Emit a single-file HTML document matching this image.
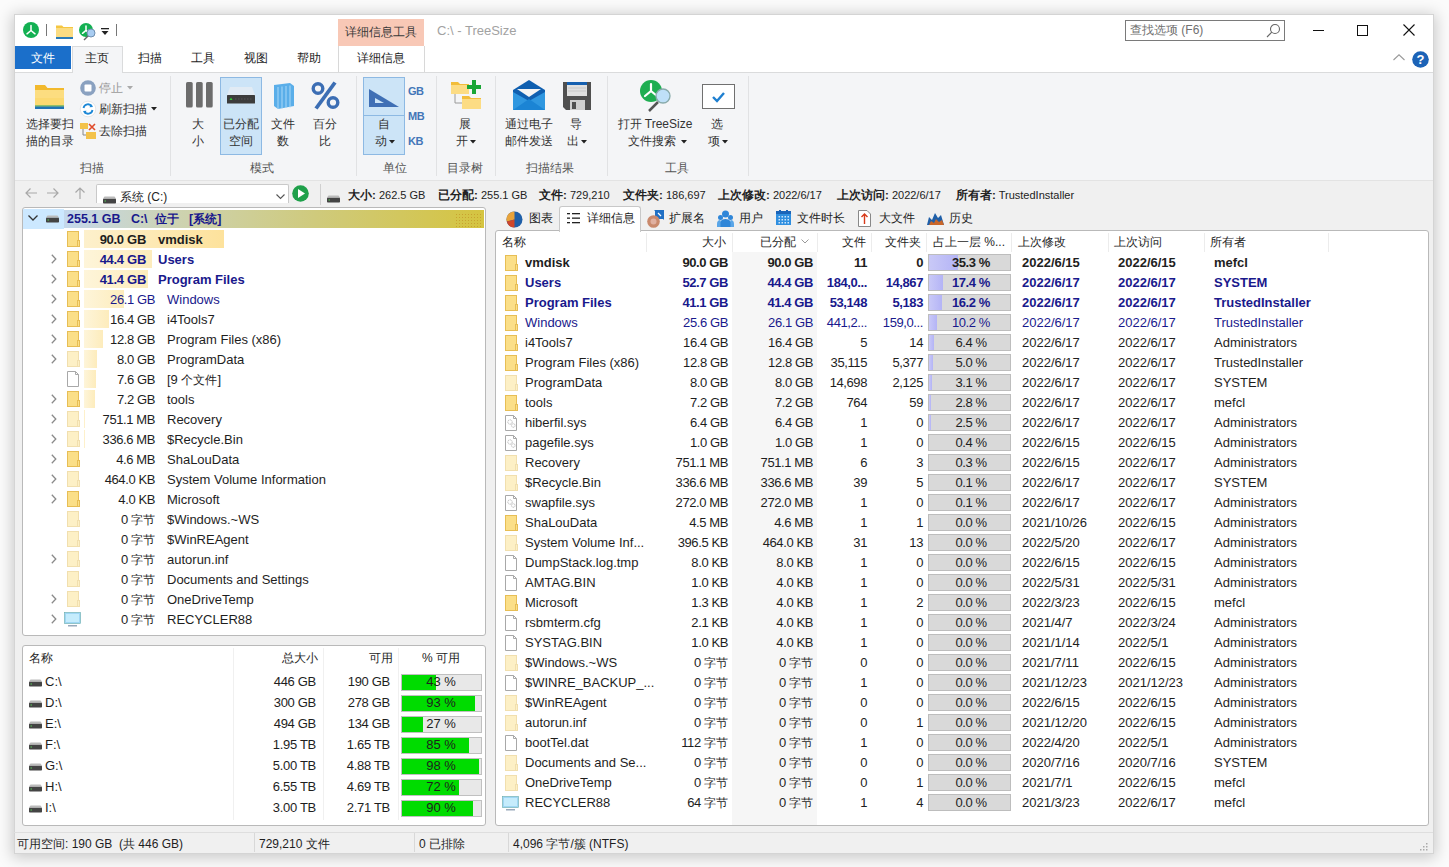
<!DOCTYPE html><html><head><meta charset="utf-8"><style>
*{margin:0;padding:0;box-sizing:border-box}
html,body{width:1449px;height:867px;overflow:hidden;background:#fbfbfb;font-family:"Liberation Sans",sans-serif;font-size:13px;color:#1e1e1e}
.t{position:absolute;white-space:nowrap;line-height:20px;height:20px}
.r{position:absolute}
.b{font-weight:bold}
.bl{color:#19198c}
.svg{position:absolute;overflow:visible}
.c{display:inline-block;width:12px;text-align:center;font-style:normal;font-size:12px}
html.nocjk .c{-webkit-text-fill-color:transparent;opacity:.85;background-repeat:no-repeat;
background-image:linear-gradient(currentColor,currentColor),linear-gradient(currentColor,currentColor),linear-gradient(currentColor,currentColor),linear-gradient(currentColor,currentColor),linear-gradient(currentColor,currentColor);
background-size:10px 1px,10px 1px,10px 1px,1px 11px,1px 11px;
background-position:1px 5px,1px 9px,1px 14px,3px 4px,8px 4px}
html.nocjk .c:nth-child(3n+2){background-size:10px 1px,7px 1px,10px 1px,1px 11px,1px 9px;background-position:1px 5px,4px 10px,1px 14px,2px 4px,7px 6px}
html.nocjk .c:nth-child(3n){background-size:10px 1px,10px 1px,6px 1px,1px 11px,1px 11px;background-position:1px 4px,1px 10px,5px 14px,5px 4px,9px 4px}
</style></head><body>
<div class="r" style="left:14px;top:14px;width:1420px;height:840px;background:#f0f0f0;border:1px solid #d4d4d4;box-shadow:0 2px 14px 2px rgba(0,0,0,0.20)"></div>
<div class="r" style="left:15px;top:15px;width:1418px;height:57px;background:#fff"></div>
<div class="r" style="left:15px;top:72px;width:1418px;height:109px;background:#f4f5f7;border-top:1px solid #dadbdc;border-bottom:1px solid #e3e3e3"></div>
<svg class="svg" style="left:0px;top:0px" width="1" height="1" viewBox="0 0 1 1"><circle cx="31" cy="30" r="8" fill="#13b052"/><path d="M31 25.5 V30.5 L27.0 33.8 M31 30.5 L35.0 33.8" stroke="#fff" stroke-width="1.5" fill="none" stroke-linecap="round"/></svg>
<div class="r" style="left:46px;top:24px;width:1px;height:12px;background:#777"></div>
<svg class="svg" style="left:56px;top:24px" width="17" height="15" viewBox="0 0 17 15"><path d="M0 1.5 h6 l1.5 1.5 h9.5 v10.5 h-17z" fill="#f5c640"/><rect x="0" y="4" width="17" height="9.5" fill="#fbdc82"/><rect x="0" y="13" width="17" height="2" fill="#2a7bb8"/></svg>
<svg class="svg" style="left:0px;top:0px" width="1" height="1" viewBox="0 0 1 1"><circle cx="86" cy="30" r="7" fill="#13b052"/><path d="M86 26.0625 V30.4375 L82.5 33.325 M86 30.4375 L89.5 33.325" stroke="#fff" stroke-width="1.5" fill="none" stroke-linecap="round"/><circle cx="91" cy="33" r="4" fill="#a9cdf2" stroke="#6f8fb0" stroke-width="1"/><path d="M88 36 L84 40" stroke="#666" stroke-width="1.5"/></svg>
<svg class="svg" style="left:101px;top:28px" width="8" height="8" viewBox="0 0 8 8"><rect x="0" y="0" width="8" height="1.3" fill="#222"/><path d="M0.5 3 h7 l-3.5 4z" fill="#222"/></svg>
<div class="r" style="left:116px;top:24px;width:1px;height:12px;background:#777"></div>
<div class="r" style="left:338px;top:19px;width:86px;height:27px;background:#f8c8b6"></div>
<div class="t " style="left:231px;top:22px;width:300px;text-align:center;color:#3a3a3a;font-size:12px"><i class="c">详</i><i class="c">细</i><i class="c">信</i><i class="c">息</i><i class="c">工</i><i class="c">具</i></div>
<div class="t " style="left:437px;top:21px;color:#a2a2a2">C:\ - TreeSize</div>
<div class="r" style="left:1125px;top:20px;width:160px;height:21px;background:#fff;border:1px solid #7a7a7a"></div>
<div class="t " style="left:1130px;top:20px;color:#707070;font-size:12px"><i class="c">查</i><i class="c">找</i><i class="c">选</i><i class="c">项</i> (F6)</div>
<svg class="svg" style="left:1266px;top:23px" width="15" height="15" viewBox="0 0 15 15"><circle cx="9" cy="6" r="4.5" fill="none" stroke="#666" stroke-width="1.1"/><path d="M5.8 9.2 L1 14" stroke="#666" stroke-width="1.1"/></svg>
<div class="r" style="left:1313px;top:30px;width:11px;height:1px;background:#111"></div>
<div class="r" style="left:1357px;top:25px;width:11px;height:11px;border:1px solid #111"></div>
<svg class="svg" style="left:1403px;top:24px" width="12" height="12" viewBox="0 0 12 12"><path d="M0.5 0.5 L11.5 11.5 M11.5 0.5 L0.5 11.5" stroke="#111" stroke-width="1.1"/></svg>
<div class="r" style="left:15px;top:46px;width:56px;height:23px;background:#1b6fca"></div>
<div class="t " style="left:-107px;top:48px;width:300px;text-align:center;color:#fff;font-size:12px"><i class="c">文</i><i class="c">件</i></div>
<div class="r" style="left:72px;top:46px;width:51px;height:27px;background:#f4f5f7;border:1px solid #dadbdc;border-bottom:none"></div>
<div class="t " style="left:-53px;top:48px;width:300px;text-align:center;font-size:12px"><i class="c">主</i><i class="c">页</i></div>
<div class="t " style="left:0px;top:48px;width:300px;text-align:center;font-size:12px"><i class="c">扫</i><i class="c">描</i></div>
<div class="t " style="left:53px;top:48px;width:300px;text-align:center;font-size:12px"><i class="c">工</i><i class="c">具</i></div>
<div class="t " style="left:106px;top:48px;width:300px;text-align:center;font-size:12px"><i class="c">视</i><i class="c">图</i></div>
<div class="t " style="left:159px;top:48px;width:300px;text-align:center;font-size:12px"><i class="c">帮</i><i class="c">助</i></div>
<div class="r" style="left:338px;top:46px;width:1px;height:26px;background:#d8d8d8"></div>
<div class="r" style="left:424px;top:46px;width:1px;height:26px;background:#d8d8d8"></div>
<div class="t " style="left:231px;top:48px;width:300px;text-align:center;font-size:12px"><i class="c">详</i><i class="c">细</i><i class="c">信</i><i class="c">息</i></div>
<svg class="svg" style="left:1393px;top:54px" width="12" height="7" viewBox="0 0 12 7"><path d="M0.5 6 L6 0.8 L11.5 6" stroke="#9a9a9a" stroke-width="1.1" fill="none"/></svg>
<svg class="svg" style="left:1412px;top:51px" width="17" height="17" viewBox="0 0 17 17"><circle cx="8.5" cy="8.5" r="8.3" fill="#1c63b7"/><text x="8.5" y="13.2" font-size="13" font-weight="bold" text-anchor="middle" fill="#fff" font-family="Liberation Sans">?</text></svg>
<div class="r" style="left:170px;top:76px;width:1px;height:100px;background:#e1e2e4"></div>
<div class="r" style="left:356px;top:76px;width:1px;height:100px;background:#e1e2e4"></div>
<div class="r" style="left:436px;top:76px;width:1px;height:100px;background:#e1e2e4"></div>
<div class="r" style="left:495px;top:76px;width:1px;height:100px;background:#e1e2e4"></div>
<div class="r" style="left:607px;top:76px;width:1px;height:100px;background:#e1e2e4"></div>
<div class="r" style="left:748px;top:76px;width:1px;height:100px;background:#e1e2e4"></div>
<div class="t " style="left:-58px;top:158px;width:300px;text-align:center;color:#555;font-size:12px"><i class="c">扫</i><i class="c">描</i></div>
<div class="t " style="left:112px;top:158px;width:300px;text-align:center;color:#555;font-size:12px"><i class="c">模</i><i class="c">式</i></div>
<div class="t " style="left:245px;top:158px;width:300px;text-align:center;color:#555;font-size:12px"><i class="c">单</i><i class="c">位</i></div>
<div class="t " style="left:315px;top:158px;width:300px;text-align:center;color:#555;font-size:12px"><i class="c">目</i><i class="c">录</i><i class="c">树</i></div>
<div class="t " style="left:400px;top:158px;width:300px;text-align:center;color:#555;font-size:12px"><i class="c">扫</i><i class="c">描</i><i class="c">结</i><i class="c">果</i></div>
<div class="t " style="left:527px;top:158px;width:300px;text-align:center;color:#555;font-size:12px"><i class="c">工</i><i class="c">具</i></div>
<svg class="svg" style="left:35px;top:84px" width="29" height="26" viewBox="0 0 29 26"><path d="M0 1 h10 l2.5 3 h16.5 v18 h-29z" fill="#f2b92d"/><rect x="0" y="6" width="29" height="16" fill="#fbd971"/><rect x="0" y="6" width="29" height="8" fill="#fde08a" opacity="0.6"/><rect x="0" y="22" width="29" height="3" fill="#1f73b5"/><rect x="0" y="21" width="29" height="1.5" fill="#8fbf6a"/></svg>
<div class="t " style="left:-100px;top:114px;width:300px;text-align:center;color:#333;font-size:12px"><i class="c">选</i><i class="c">择</i><i class="c">要</i><i class="c">扫</i></div>
<div class="t " style="left:-100px;top:131px;width:300px;text-align:center;color:#333;font-size:12px"><i class="c">描</i><i class="c">的</i><i class="c">目</i><i class="c">录</i></div>
<svg class="svg" style="left:80px;top:80px" width="16" height="16" viewBox="0 0 16 16"><circle cx="8" cy="8" r="7.8" fill="#8aa1c0"/><rect x="4.5" y="4.5" width="7" height="7" rx="1" fill="#fff"/></svg>
<div class="t " style="left:99px;top:78px;color:#9a9a9a;font-size:12px"><i class="c">停</i><i class="c">止</i></div>
<svg class="svg" style="left:127px;top:86px" width="6" height="4" viewBox="0 0 6 4"><path d="M0 0 h6 l-3 3.5z" fill="#aaa"/></svg>
<svg class="svg" style="left:80px;top:101px" width="16" height="16" viewBox="0 0 16 16"><circle cx="8" cy="8" r="7.8" fill="#fff" stroke="#d8d8d8" stroke-width="0.6"/><path d="M3.5 7 A4.5 4.5 0 0 1 11.8 5.5 M12.5 9 A4.5 4.5 0 0 1 4.2 10.5" stroke="#1e88d6" stroke-width="1.8" fill="none"/><path d="M11 3 L13 6 L9.5 6.2z M5 13 L3 10 L6.5 9.8z" fill="#1e88d6"/></svg>
<div class="t " style="left:99px;top:99px;color:#333;font-size:12px"><i class="c">刷</i><i class="c">新</i><i class="c">扫</i><i class="c">描</i></div>
<svg class="svg" style="left:151px;top:107px" width="6" height="4" viewBox="0 0 6 4"><path d="M0 0 h6 l-3 3.5z" fill="#222"/></svg>
<svg class="svg" style="left:80px;top:123px" width="17" height="16" viewBox="0 0 17 16"><rect x="0" y="0" width="8" height="6" fill="#f3c24a"/><rect x="6" y="9" width="10" height="7" fill="#f3c24a"/><path d="M3 6 V12 H6" stroke="#888" fill="none"/><path d="M9 1 L15 7 M15 1 L9 7" stroke="#e04a2a" stroke-width="1.6"/></svg>
<div class="t " style="left:99px;top:121px;color:#333;font-size:12px"><i class="c">去</i><i class="c">除</i><i class="c">扫</i><i class="c">描</i></div>
<svg class="svg" style="left:186px;top:82px" width="27" height="26" viewBox="0 0 27 26"><rect x="0" y="0" width="6.7" height="25.6" rx="1.6" fill="#6c6c6c"/><rect x="10" y="0" width="6.7" height="25.6" rx="1.6" fill="#6c6c6c"/><rect x="20" y="0" width="6.7" height="25.6" rx="1.6" fill="#6c6c6c"/></svg>
<div class="t " style="left:48px;top:114px;width:300px;text-align:center;color:#333;font-size:12px"><i class="c">大</i></div>
<div class="t " style="left:48px;top:131px;width:300px;text-align:center;color:#333;font-size:12px"><i class="c">小</i></div>
<div class="r" style="left:220px;top:77px;width:42px;height:78px;background:#cce4f7;border:1px solid #8db9e3"></div>
<svg class="svg" style="left:227px;top:86px" width="28" height="18" viewBox="0 0 28 18"><path d="M3 1 H25 L28 9 H0z" fill="#e6ecf2" opacity="0.8"/><rect x="0" y="9" width="28" height="8.5" rx="0.6" fill="#3c3c3c"/><path d="M4 11.5 L5.5 14 H2.5z" fill="#3c3"/><path d="M8 13 H25" stroke="#555" stroke-width="1" stroke-dasharray="1.5 1.5"/></svg>
<div class="t " style="left:91px;top:114px;width:300px;text-align:center;color:#333;font-size:12px"><i class="c">已</i><i class="c">分</i><i class="c">配</i></div>
<div class="t " style="left:91px;top:131px;width:300px;text-align:center;color:#333;font-size:12px"><i class="c">空</i><i class="c">间</i></div>
<svg class="svg" style="left:272px;top:83px" width="23" height="26" viewBox="0 0 23 26"><path d="M2 2 L18 0 L22 3 V23 L6 26 L2 23z" fill="#5aaee9"/><path d="M6 4 V26 M10 3.5 V25.5 M14 3 V25 M18 2.5 V24.5" stroke="#a8d8f8" stroke-width="1"/></svg>
<div class="t " style="left:133px;top:114px;width:300px;text-align:center;color:#333;font-size:12px"><i class="c">文</i><i class="c">件</i></div>
<div class="t " style="left:133px;top:131px;width:300px;text-align:center;color:#333;font-size:12px"><i class="c">数</i></div>
<svg class="svg" style="left:311px;top:82px" width="29" height="27" viewBox="0 0 29 27"><circle cx="7" cy="6.5" r="4.8" fill="none" stroke="#3c6eb4" stroke-width="3.4"/><circle cx="22" cy="20.5" r="4.8" fill="none" stroke="#3c6eb4" stroke-width="3.4"/><path d="M24 0.5 L5 26.5" stroke="#3c6eb4" stroke-width="3.8"/></svg>
<div class="t " style="left:175px;top:114px;width:300px;text-align:center;color:#333;font-size:12px"><i class="c">百</i><i class="c">分</i></div>
<div class="t " style="left:175px;top:131px;width:300px;text-align:center;color:#333;font-size:12px"><i class="c">比</i></div>
<div class="r" style="left:363px;top:77px;width:42px;height:78px;background:#cce4f7;border:1px solid #8db9e3"></div>
<div class="r" style="left:363px;top:115px;width:42px;height:1px;background:#8db9e3"></div>
<svg class="svg" style="left:369px;top:89px" width="31" height="19" viewBox="0 0 31 19"><path d="M0 0 L30 18 H0z" fill="#3f6fb5"/><path d="M6 9 L15 14 H6z" fill="#cce4f7"/></svg>
<div class="t " style="left:234px;top:114px;width:300px;text-align:center;color:#333;font-size:12px"><i class="c">自</i></div>
<div class="t " style="left:231px;top:131px;width:300px;text-align:center;color:#333;font-size:12px"><i class="c">动</i></div>
<svg class="svg" style="left:389px;top:140px" width="6" height="4" viewBox="0 0 6 4"><path d="M0 0 h6 l-3 3.5z" fill="#222"/></svg>
<div class="t " style="left:408px;top:81px;color:#4376b8;font-weight:bold;font-size:11px;letter-spacing:-0.5px">GB</div>
<div class="t " style="left:408px;top:106px;color:#4376b8;font-weight:bold;font-size:11px;letter-spacing:-0.5px">MB</div>
<div class="t " style="left:408px;top:131px;color:#4376b8;font-weight:bold;font-size:11px;letter-spacing:-0.5px">KB</div>
<svg class="svg" style="left:450px;top:79px" width="33" height="32" viewBox="0 0 33 32"><path d="M1 3 h7 l2 2 h9 v10 h-18z" fill="#f2bd3a"/><rect x="1" y="6" width="18" height="9" fill="#fcdc84"/><path d="M5 15 V24 H12" stroke="#9a9a9a" fill="none"/><path d="M12 17 h7 l2 2 h10 v11 h-19z" fill="#f2bd3a"/><rect x="12" y="20" width="19" height="10" fill="#fcdc84"/><path d="M22 1 h4 v5 h5 v4 h-5 v5 h-4 v-5 h-5 v-4 h5z" fill="#19a636"/></svg>
<div class="t " style="left:315px;top:114px;width:300px;text-align:center;color:#333;font-size:12px"><i class="c">展</i></div>
<div class="t " style="left:312px;top:131px;width:300px;text-align:center;color:#333;font-size:12px"><i class="c">开</i></div>
<svg class="svg" style="left:470px;top:140px" width="6" height="4" viewBox="0 0 6 4"><path d="M0 0 h6 l-3 3.5z" fill="#222"/></svg>
<svg class="svg" style="left:513px;top:80px" width="32" height="30" viewBox="0 0 32 30"><path d="M0 10 L16 0 L32 10 V30 H0z" fill="#0f5fb0"/><path d="M4 9 H28 L16 17z" fill="#f4f4f4"/><path d="M0 12 L16 21 L32 12 V30 H0z" fill="#2f97e0"/><path d="M0 30 L16 19 L32 30z" fill="#1b84d4"/></svg>
<div class="t " style="left:379px;top:114px;width:300px;text-align:center;color:#333;font-size:12px"><i class="c">通</i><i class="c">过</i><i class="c">电</i><i class="c">子</i></div>
<div class="t " style="left:379px;top:131px;width:300px;text-align:center;color:#333;font-size:12px"><i class="c">邮</i><i class="c">件</i><i class="c">发</i><i class="c">送</i></div>
<svg class="svg" style="left:563px;top:82px" width="28" height="28" viewBox="0 0 28 28"><path d="M0 0 H28 V28 H3 L0 25z" fill="#505050"/><rect x="4" y="0" width="20" height="3" fill="#1660b0"/><rect x="4" y="3" width="20" height="11" fill="#e0e0e0"/><path d="M5 6 H23 M5 9 H23" stroke="#c8c8c8"/><rect x="7" y="18" width="15" height="10" fill="#cfcfcf"/><rect x="9" y="20" width="4" height="7" fill="#505050"/></svg>
<div class="t " style="left:426px;top:114px;width:300px;text-align:center;color:#333;font-size:12px"><i class="c">导</i></div>
<div class="t " style="left:423px;top:131px;width:300px;text-align:center;color:#333;font-size:12px"><i class="c">出</i></div>
<svg class="svg" style="left:581px;top:140px" width="6" height="4" viewBox="0 0 6 4"><path d="M0 0 h6 l-3 3.5z" fill="#222"/></svg>
<svg class="svg" style="left:640px;top:80px" width="34" height="34" viewBox="0 0 34 34"><circle cx="11" cy="11" r="11" fill="#1fae52"/><path d="M11 4 V11 L5 16 M11 11 L17 16" stroke="#fff" stroke-width="2.2" fill="none" stroke-linecap="round"/><path d="M18 22 L9 31" stroke="#555" stroke-width="2.5"/><circle cx="23" cy="16" r="7" fill="#bfe0f8" stroke="#8aa" stroke-width="1.3"/></svg>
<div class="t " style="left:505px;top:114px;width:300px;text-align:center;color:#333;font-size:12px"><i class="c">打</i><i class="c">开</i> TreeSize</div>
<div class="t " style="left:502px;top:131px;width:300px;text-align:center;color:#333;font-size:12px"><i class="c">文</i><i class="c">件</i><i class="c">搜</i><i class="c">索</i></div>
<svg class="svg" style="left:681px;top:140px" width="6" height="4" viewBox="0 0 6 4"><path d="M0 0 h6 l-3 3.5z" fill="#222"/></svg>
<svg class="svg" style="left:702px;top:84px" width="33" height="25" viewBox="0 0 33 25"><rect x="0.5" y="0.5" width="32" height="24" fill="#fff" stroke="#707070"/><path d="M11 13 L15 17 L22 9" stroke="#1e7fd0" stroke-width="2.4" fill="none"/></svg>
<div class="t " style="left:567px;top:114px;width:300px;text-align:center;color:#333;font-size:12px"><i class="c">选</i></div>
<div class="t " style="left:564px;top:131px;width:300px;text-align:center;color:#333;font-size:12px"><i class="c">项</i></div>
<svg class="svg" style="left:722px;top:140px" width="6" height="4" viewBox="0 0 6 4"><path d="M0 0 h6 l-3 3.5z" fill="#222"/></svg>
<svg class="svg" style="left:25px;top:187px" width="12" height="12" viewBox="0 0 12 12"><path d="M12 6 H1 M5.5 1.5 L1 6 L5.5 10.5" stroke="#a8a8a8" stroke-width="1.2" fill="none"/></svg>
<svg class="svg" style="left:47px;top:187px" width="12" height="12" viewBox="0 0 12 12"><path d="M0 6 H11 M6.5 1.5 L11 6 L6.5 10.5" stroke="#a8a8a8" stroke-width="1.2" fill="none"/></svg>
<svg class="svg" style="left:74px;top:187px" width="12" height="12" viewBox="0 0 12 12"><path d="M6 12 V1 M1.5 5.5 L6 1 L10.5 5.5" stroke="#a8a8a8" stroke-width="1.2" fill="none"/></svg>
<div class="r" style="left:96px;top:184px;width:193px;height:19px;background:#fff;border:1px solid #c9c9c9;border-bottom:none;border-radius:2px 2px 0 0"></div>
<svg class="svg" style="left:103px;top:196px" width="13" height="8" viewBox="0 0 13 8"><rect x="0" y="2.5" width="13" height="5" rx="0.8" fill="#444"/><path d="M1.5 0.5 H11.5 L13 2.5 H0z" fill="#bbb"/><rect x="1.5" y="4.5" width="1.5" height="1" fill="#5c5"/></svg>
<div class="t " style="left:120px;top:187px;font-size:12px"><i class="c">系</i><i class="c">统</i> (C:)</div>
<svg class="svg" style="left:276px;top:194px" width="9" height="5" viewBox="0 0 9 5"><path d="M0.5 0.5 L4.5 4.5 L8.5 0.5" stroke="#555" fill="none" stroke-width="1.1"/></svg>
<svg class="svg" style="left:292px;top:185px" width="17" height="17" viewBox="0 0 17 17"><circle cx="8.5" cy="8.5" r="8.3" fill="#1fa04a"/><path d="M6 4 L13 8.5 L6 13z" fill="#fff"/></svg>
<div class="r" style="left:320px;top:184px;width:1px;height:21px;background:#d0d0d0"></div>
<svg class="svg" style="left:327px;top:195px" width="13" height="8" viewBox="0 0 13 8"><rect x="0" y="2.5" width="13" height="5" rx="0.8" fill="#444"/><path d="M1.5 0.5 H11.5 L13 2.5 H0z" fill="#bbb"/><rect x="1.5" y="4.5" width="1.5" height="1" fill="#5c5"/></svg>
<div class="t " style="left:348px;top:185px;font-size:11px;color:#222"><b style="font-size:11.5px"><i class="c">大</i><i class="c">小</i>:</b> 262.5 GB</div>
<div class="t " style="left:438px;top:185px;font-size:11px;color:#222"><b style="font-size:11.5px"><i class="c">已</i><i class="c">分</i><i class="c">配</i>:</b> 255.1 GB</div>
<div class="t " style="left:539px;top:185px;font-size:11px;color:#222"><b style="font-size:11.5px"><i class="c">文</i><i class="c">件</i>:</b> 729,210</div>
<div class="t " style="left:623px;top:185px;font-size:11px;color:#222"><b style="font-size:11.5px"><i class="c">文</i><i class="c">件</i><i class="c">夹</i>:</b> 186,697</div>
<div class="t " style="left:718px;top:185px;font-size:11px;color:#222"><b style="font-size:11.5px"><i class="c">上</i><i class="c">次</i><i class="c">修</i><i class="c">改</i>:</b> 2022/6/17</div>
<div class="t " style="left:837px;top:185px;font-size:11px;color:#222"><b style="font-size:11.5px"><i class="c">上</i><i class="c">次</i><i class="c">访</i><i class="c">问</i>:</b> 2022/6/17</div>
<div class="t " style="left:956px;top:185px;font-size:11px;color:#222"><b style="font-size:11.5px"><i class="c">所</i><i class="c">有</i><i class="c">者</i>:</b> TrustedInstaller</div>
<div class="r" style="left:22px;top:207px;width:464px;height:429px;background:#fff;border:1px solid #b9b9b9;border-radius:3px"></div>
<div class="r" style="left:23px;top:209px;width:41px;height:20px;background:#cce8ff"></div>
<div class="r" style="left:64px;top:210px;width:420px;height:18px;background:linear-gradient(90deg,#c4d8ec 0%,#cdd3b4 25%,#cfca7c 60%,#d5c440 100%)"></div>
<div class="r" style="left:455px;top:213px;width:26px;height:14px;background-image:radial-gradient(#c59a2a 0.8px, transparent 1px);background-size:3px 3px;opacity:0.8"></div>
<svg class="svg" style="left:28px;top:215px" width="10" height="6" viewBox="0 0 10 6"><path d="M0.5 0.5 L5 5 L9.5 0.5" stroke="#333" stroke-width="1.3" fill="none"/></svg>
<svg class="svg" style="left:46px;top:215px" width="13" height="8" viewBox="0 0 13 8"><rect x="0" y="2.5" width="13" height="5" rx="0.8" fill="#444"/><path d="M1.5 0.5 H11.5 L13 2.5 H0z" fill="#bbb"/><rect x="1.5" y="4.5" width="1.5" height="1" fill="#5c5"/></svg>
<div class="t b bl" style="left:67px;top:209px;font-size:12.5px">255.1 GB&nbsp;&nbsp;&nbsp;C:\&nbsp;&nbsp;<i class="c">位</i><i class="c">于</i>&nbsp;&nbsp;&nbsp;[<i class="c">系</i><i class="c">统</i>]</div>
<div class="r" style="left:84px;top:230px;width:140px;height:18px;background:linear-gradient(90deg,#fdf0cc,#fde29c)"></div>
<svg class="svg" style="left:67px;top:231px" width="13" height="16" viewBox="0 0 13 16"><rect x="0.5" y="0.5" width="11" height="15" fill="#fbdf88" stroke="#e7be55" stroke-width="1"/><rect x="10.5" y="9.5" width="2" height="6" fill="#fbdf88" stroke="#e7be55" stroke-width="1"/></svg>
<div class="t b" style="left:-154px;top:230px;width:300px;text-align:right;letter-spacing:-0.3px">90.0 GB</div>
<div class="t b" style="left:158px;top:230px;">vmdisk</div>
<div class="r" style="left:84px;top:250px;width:68px;height:18px;background:linear-gradient(90deg,#fef5da,#fdecbc)"></div>
<svg class="svg" style="left:51px;top:254px" width="6" height="10" viewBox="0 0 6 10"><path d="M0.8 0.8 L4.8 5 L0.8 9.2" stroke="#8a8a8a" stroke-width="1.3" fill="none"/></svg>
<svg class="svg" style="left:67px;top:251px" width="13" height="16" viewBox="0 0 13 16"><rect x="0.5" y="0.5" width="11" height="15" fill="#fbdf88" stroke="#e7be55" stroke-width="1"/><rect x="10.5" y="9.5" width="2" height="6" fill="#fbdf88" stroke="#e7be55" stroke-width="1"/></svg>
<div class="t b bl" style="left:-154px;top:250px;width:300px;text-align:right;letter-spacing:-0.3px">44.4 GB</div>
<div class="t b bl" style="left:158px;top:250px;">Users</div>
<div class="r" style="left:84px;top:270px;width:64px;height:18px;background:linear-gradient(90deg,#fef5da,#fdecbc)"></div>
<svg class="svg" style="left:51px;top:274px" width="6" height="10" viewBox="0 0 6 10"><path d="M0.8 0.8 L4.8 5 L0.8 9.2" stroke="#8a8a8a" stroke-width="1.3" fill="none"/></svg>
<svg class="svg" style="left:67px;top:271px" width="13" height="16" viewBox="0 0 13 16"><rect x="0.5" y="0.5" width="11" height="15" fill="#fbdf88" stroke="#e7be55" stroke-width="1"/><rect x="10.5" y="9.5" width="2" height="6" fill="#fbdf88" stroke="#e7be55" stroke-width="1"/></svg>
<div class="t b bl" style="left:-154px;top:270px;width:300px;text-align:right;letter-spacing:-0.3px">41.4 GB</div>
<div class="t b bl" style="left:158px;top:270px;">Program Files</div>
<div class="r" style="left:84px;top:290px;width:40px;height:18px;background:linear-gradient(90deg,#fef5da,#fdecbc)"></div>
<svg class="svg" style="left:51px;top:294px" width="6" height="10" viewBox="0 0 6 10"><path d="M0.8 0.8 L4.8 5 L0.8 9.2" stroke="#8a8a8a" stroke-width="1.3" fill="none"/></svg>
<svg class="svg" style="left:67px;top:291px" width="13" height="16" viewBox="0 0 13 16"><rect x="0.5" y="0.5" width="11" height="15" fill="#fbdf88" stroke="#e7be55" stroke-width="1"/><rect x="10.5" y="9.5" width="2" height="6" fill="#fbdf88" stroke="#e7be55" stroke-width="1"/></svg>
<div class="t bl" style="left:-145px;top:290px;width:300px;text-align:right;letter-spacing:-0.4px">26.1 GB</div>
<div class="t bl" style="left:167px;top:290px;">Windows</div>
<div class="r" style="left:84px;top:310px;width:25px;height:18px;background:linear-gradient(90deg,#fef5da,#fdecbc)"></div>
<svg class="svg" style="left:51px;top:314px" width="6" height="10" viewBox="0 0 6 10"><path d="M0.8 0.8 L4.8 5 L0.8 9.2" stroke="#8a8a8a" stroke-width="1.3" fill="none"/></svg>
<svg class="svg" style="left:67px;top:311px" width="13" height="16" viewBox="0 0 13 16"><rect x="0.5" y="0.5" width="11" height="15" fill="#fbdf88" stroke="#e7be55" stroke-width="1"/><rect x="10.5" y="9.5" width="2" height="6" fill="#fbdf88" stroke="#e7be55" stroke-width="1"/></svg>
<div class="t " style="left:-145px;top:310px;width:300px;text-align:right;letter-spacing:-0.4px">16.4 GB</div>
<div class="t " style="left:167px;top:310px;">i4Tools7</div>
<div class="r" style="left:84px;top:330px;width:19px;height:18px;background:linear-gradient(90deg,#fef5da,#fdecbc)"></div>
<svg class="svg" style="left:51px;top:334px" width="6" height="10" viewBox="0 0 6 10"><path d="M0.8 0.8 L4.8 5 L0.8 9.2" stroke="#8a8a8a" stroke-width="1.3" fill="none"/></svg>
<svg class="svg" style="left:67px;top:331px" width="13" height="16" viewBox="0 0 13 16"><rect x="0.5" y="0.5" width="11" height="15" fill="#fbdf88" stroke="#e7be55" stroke-width="1"/><rect x="10.5" y="9.5" width="2" height="6" fill="#fbdf88" stroke="#e7be55" stroke-width="1"/></svg>
<div class="t " style="left:-145px;top:330px;width:300px;text-align:right;letter-spacing:-0.4px">12.8 GB</div>
<div class="t " style="left:167px;top:330px;">Program Files (x86)</div>
<div class="r" style="left:84px;top:350px;width:13px;height:18px;background:linear-gradient(90deg,#fef5da,#fdecbc)"></div>
<svg class="svg" style="left:51px;top:354px" width="6" height="10" viewBox="0 0 6 10"><path d="M0.8 0.8 L4.8 5 L0.8 9.2" stroke="#8a8a8a" stroke-width="1.3" fill="none"/></svg>
<svg class="svg" style="left:67px;top:351px" width="13" height="16" viewBox="0 0 13 16"><rect x="0.5" y="0.5" width="11" height="15" fill="#fdf0c6" stroke="#f1dfae" stroke-width="1"/><rect x="10.5" y="9.5" width="2" height="6" fill="#fdf0c6" stroke="#f1dfae" stroke-width="1"/></svg>
<div class="t " style="left:-145px;top:350px;width:300px;text-align:right;letter-spacing:-0.4px">8.0 GB</div>
<div class="t " style="left:167px;top:350px;">ProgramData</div>
<div class="r" style="left:84px;top:370px;width:12px;height:18px;background:linear-gradient(90deg,#fef5da,#fdecbc)"></div>
<svg class="svg" style="left:67px;top:371px" width="13" height="16" viewBox="0 0 13 16"><path d="M0.5 0.5 H8.5 L11.5 3.5 V15.5 H0.5z" fill="#fff" stroke="#a8a8a8" stroke-width="1"/><path d="M8.5 0.5 V3.5 H11.5" fill="none" stroke="#a8a8a8"/></svg>
<div class="t " style="left:-145px;top:370px;width:300px;text-align:right;letter-spacing:-0.4px">7.6 GB</div>
<div class="t " style="left:167px;top:370px;">[9 <i class="c">个</i><i class="c">文</i><i class="c">件</i>]</div>
<div class="r" style="left:84px;top:390px;width:11px;height:18px;background:linear-gradient(90deg,#fef5da,#fdecbc)"></div>
<svg class="svg" style="left:51px;top:394px" width="6" height="10" viewBox="0 0 6 10"><path d="M0.8 0.8 L4.8 5 L0.8 9.2" stroke="#8a8a8a" stroke-width="1.3" fill="none"/></svg>
<svg class="svg" style="left:67px;top:391px" width="13" height="16" viewBox="0 0 13 16"><rect x="0.5" y="0.5" width="11" height="15" fill="#fbdf88" stroke="#e7be55" stroke-width="1"/><rect x="10.5" y="9.5" width="2" height="6" fill="#fbdf88" stroke="#e7be55" stroke-width="1"/></svg>
<div class="t " style="left:-145px;top:390px;width:300px;text-align:right;letter-spacing:-0.4px">7.2 GB</div>
<div class="t " style="left:167px;top:390px;">tools</div>
<div class="r" style="left:84px;top:410px;width:1px;height:18px;background:linear-gradient(90deg,#fef5da,#fdecbc)"></div>
<svg class="svg" style="left:51px;top:414px" width="6" height="10" viewBox="0 0 6 10"><path d="M0.8 0.8 L4.8 5 L0.8 9.2" stroke="#8a8a8a" stroke-width="1.3" fill="none"/></svg>
<svg class="svg" style="left:67px;top:411px" width="13" height="16" viewBox="0 0 13 16"><rect x="0.5" y="0.5" width="11" height="15" fill="#fdf0c6" stroke="#f1dfae" stroke-width="1"/><rect x="10.5" y="9.5" width="2" height="6" fill="#fdf0c6" stroke="#f1dfae" stroke-width="1"/></svg>
<div class="t " style="left:-145px;top:410px;width:300px;text-align:right;letter-spacing:-0.4px">751.1 MB</div>
<div class="t " style="left:167px;top:410px;">Recovery</div>
<div class="r" style="left:84px;top:430px;width:1px;height:18px;background:linear-gradient(90deg,#fef5da,#fdecbc)"></div>
<svg class="svg" style="left:51px;top:434px" width="6" height="10" viewBox="0 0 6 10"><path d="M0.8 0.8 L4.8 5 L0.8 9.2" stroke="#8a8a8a" stroke-width="1.3" fill="none"/></svg>
<svg class="svg" style="left:67px;top:431px" width="13" height="16" viewBox="0 0 13 16"><rect x="0.5" y="0.5" width="11" height="15" fill="#fdf0c6" stroke="#f1dfae" stroke-width="1"/><rect x="10.5" y="9.5" width="2" height="6" fill="#fdf0c6" stroke="#f1dfae" stroke-width="1"/></svg>
<div class="t " style="left:-145px;top:430px;width:300px;text-align:right;letter-spacing:-0.4px">336.6 MB</div>
<div class="t " style="left:167px;top:430px;">$Recycle.Bin</div>
<svg class="svg" style="left:51px;top:454px" width="6" height="10" viewBox="0 0 6 10"><path d="M0.8 0.8 L4.8 5 L0.8 9.2" stroke="#8a8a8a" stroke-width="1.3" fill="none"/></svg>
<svg class="svg" style="left:67px;top:451px" width="13" height="16" viewBox="0 0 13 16"><rect x="0.5" y="0.5" width="11" height="15" fill="#fbdf88" stroke="#e7be55" stroke-width="1"/><rect x="10.5" y="9.5" width="2" height="6" fill="#fbdf88" stroke="#e7be55" stroke-width="1"/></svg>
<div class="t " style="left:-145px;top:450px;width:300px;text-align:right;letter-spacing:-0.4px">4.6 MB</div>
<div class="t " style="left:167px;top:450px;">ShaLouData</div>
<svg class="svg" style="left:51px;top:474px" width="6" height="10" viewBox="0 0 6 10"><path d="M0.8 0.8 L4.8 5 L0.8 9.2" stroke="#8a8a8a" stroke-width="1.3" fill="none"/></svg>
<svg class="svg" style="left:67px;top:471px" width="13" height="16" viewBox="0 0 13 16"><rect x="0.5" y="0.5" width="11" height="15" fill="#fdf0c6" stroke="#f1dfae" stroke-width="1"/><rect x="10.5" y="9.5" width="2" height="6" fill="#fdf0c6" stroke="#f1dfae" stroke-width="1"/></svg>
<div class="t " style="left:-145px;top:470px;width:300px;text-align:right;letter-spacing:-0.4px">464.0 KB</div>
<div class="t " style="left:167px;top:470px;">System Volume Information</div>
<svg class="svg" style="left:51px;top:494px" width="6" height="10" viewBox="0 0 6 10"><path d="M0.8 0.8 L4.8 5 L0.8 9.2" stroke="#8a8a8a" stroke-width="1.3" fill="none"/></svg>
<svg class="svg" style="left:67px;top:491px" width="13" height="16" viewBox="0 0 13 16"><rect x="0.5" y="0.5" width="11" height="15" fill="#fbdf88" stroke="#e7be55" stroke-width="1"/><rect x="10.5" y="9.5" width="2" height="6" fill="#fbdf88" stroke="#e7be55" stroke-width="1"/></svg>
<div class="t " style="left:-145px;top:490px;width:300px;text-align:right;letter-spacing:-0.4px">4.0 KB</div>
<div class="t " style="left:167px;top:490px;">Microsoft</div>
<svg class="svg" style="left:67px;top:511px" width="13" height="16" viewBox="0 0 13 16"><rect x="0.5" y="0.5" width="11" height="15" fill="#fdf0c6" stroke="#f1dfae" stroke-width="1"/><rect x="10.5" y="9.5" width="2" height="6" fill="#fdf0c6" stroke="#f1dfae" stroke-width="1"/></svg>
<div class="t " style="left:-145px;top:510px;width:300px;text-align:right;letter-spacing:-0.4px">0 <i class="c">字</i><i class="c">节</i></div>
<div class="t " style="left:167px;top:510px;">$Windows.~WS</div>
<svg class="svg" style="left:67px;top:531px" width="13" height="16" viewBox="0 0 13 16"><rect x="0.5" y="0.5" width="11" height="15" fill="#fdf0c6" stroke="#f1dfae" stroke-width="1"/><rect x="10.5" y="9.5" width="2" height="6" fill="#fdf0c6" stroke="#f1dfae" stroke-width="1"/></svg>
<div class="t " style="left:-145px;top:530px;width:300px;text-align:right;letter-spacing:-0.4px">0 <i class="c">字</i><i class="c">节</i></div>
<div class="t " style="left:167px;top:530px;">$WinREAgent</div>
<svg class="svg" style="left:51px;top:554px" width="6" height="10" viewBox="0 0 6 10"><path d="M0.8 0.8 L4.8 5 L0.8 9.2" stroke="#8a8a8a" stroke-width="1.3" fill="none"/></svg>
<svg class="svg" style="left:67px;top:551px" width="13" height="16" viewBox="0 0 13 16"><rect x="0.5" y="0.5" width="11" height="15" fill="#fdf0c6" stroke="#f1dfae" stroke-width="1"/><rect x="10.5" y="9.5" width="2" height="6" fill="#fdf0c6" stroke="#f1dfae" stroke-width="1"/></svg>
<div class="t " style="left:-145px;top:550px;width:300px;text-align:right;letter-spacing:-0.4px">0 <i class="c">字</i><i class="c">节</i></div>
<div class="t " style="left:167px;top:550px;">autorun.inf</div>
<svg class="svg" style="left:67px;top:571px" width="13" height="16" viewBox="0 0 13 16"><rect x="0.5" y="0.5" width="11" height="15" fill="#fdf0c6" stroke="#f1dfae" stroke-width="1"/><rect x="10.5" y="9.5" width="2" height="6" fill="#fdf0c6" stroke="#f1dfae" stroke-width="1"/></svg>
<div class="t " style="left:-145px;top:570px;width:300px;text-align:right;letter-spacing:-0.4px">0 <i class="c">字</i><i class="c">节</i></div>
<div class="t " style="left:167px;top:570px;">Documents and Settings</div>
<svg class="svg" style="left:51px;top:594px" width="6" height="10" viewBox="0 0 6 10"><path d="M0.8 0.8 L4.8 5 L0.8 9.2" stroke="#8a8a8a" stroke-width="1.3" fill="none"/></svg>
<svg class="svg" style="left:67px;top:591px" width="13" height="16" viewBox="0 0 13 16"><rect x="0.5" y="0.5" width="11" height="15" fill="#fdf0c6" stroke="#f1dfae" stroke-width="1"/><rect x="10.5" y="9.5" width="2" height="6" fill="#fdf0c6" stroke="#f1dfae" stroke-width="1"/></svg>
<div class="t " style="left:-145px;top:590px;width:300px;text-align:right;letter-spacing:-0.4px">0 <i class="c">字</i><i class="c">节</i></div>
<div class="t " style="left:167px;top:590px;">OneDriveTemp</div>
<svg class="svg" style="left:51px;top:614px" width="6" height="10" viewBox="0 0 6 10"><path d="M0.8 0.8 L4.8 5 L0.8 9.2" stroke="#8a8a8a" stroke-width="1.3" fill="none"/></svg>
<svg class="svg" style="left:64px;top:612px" width="17" height="16" viewBox="0 0 17 16"><rect x="0.5" y="0.5" width="16" height="11" fill="#9fd7f5" stroke="#6aa" stroke-width="0.6"/><rect x="2" y="2" width="13" height="8" fill="#c5ecfc"/><rect x="4" y="13" width="9" height="1.5" fill="#9ab"/></svg>
<div class="t " style="left:-145px;top:610px;width:300px;text-align:right;letter-spacing:-0.4px">0 <i class="c">字</i><i class="c">节</i></div>
<div class="t " style="left:167px;top:610px;">RECYCLER88</div>
<div class="r" style="left:22px;top:645px;width:464px;height:181px;background:#fff;border:1px solid #b9b9b9;border-radius:3px"></div>
<div class="r" style="left:233px;top:648px;width:1px;height:172px;background:#f0f0f0"></div>
<div class="r" style="left:323px;top:648px;width:1px;height:172px;background:#f0f0f0"></div>
<div class="r" style="left:398px;top:648px;width:1px;height:172px;background:#f0f0f0"></div>
<div class="t " style="left:29px;top:648px;font-size:12px"><i class="c">名</i><i class="c">称</i></div>
<div class="t " style="left:18px;top:648px;width:300px;text-align:right;font-size:12px"><i class="c">总</i><i class="c">大</i><i class="c">小</i></div>
<div class="t " style="left:93px;top:648px;width:300px;text-align:right;font-size:12px"><i class="c">可</i><i class="c">用</i></div>
<div class="t " style="left:291px;top:648px;width:300px;text-align:center;font-size:12px">% <i class="c">可</i><i class="c">用</i></div>
<svg class="svg" style="left:29px;top:679px" width="13" height="8" viewBox="0 0 13 8"><rect x="0" y="2.5" width="13" height="5" rx="0.8" fill="#444"/><path d="M1.5 0.5 H11.5 L13 2.5 H0z" fill="#bbb"/><rect x="1.5" y="4.5" width="1.5" height="1" fill="#5c5"/></svg>
<div class="t " style="left:45px;top:672px;">C:\</div>
<div class="t " style="left:16px;top:672px;width:300px;text-align:right;letter-spacing:-0.3px">446 GB</div>
<div class="t " style="left:90px;top:672px;width:300px;text-align:right;letter-spacing:-0.3px">190 GB</div>
<div class="r" style="left:401px;top:674px;width:81px;height:17px;background:#e8e8e8;border:1px solid #c0c0c0"></div>
<div class="r" style="left:402px;top:675px;width:34px;height:15px;background:#00dc00"></div>
<div class="t " style="left:291px;top:672px;width:300px;text-align:center;">43 %</div>
<svg class="svg" style="left:29px;top:700px" width="13" height="8" viewBox="0 0 13 8"><rect x="0" y="2.5" width="13" height="5" rx="0.8" fill="#444"/><path d="M1.5 0.5 H11.5 L13 2.5 H0z" fill="#bbb"/><rect x="1.5" y="4.5" width="1.5" height="1" fill="#5c5"/></svg>
<div class="t " style="left:45px;top:693px;">D:\</div>
<div class="t " style="left:16px;top:693px;width:300px;text-align:right;letter-spacing:-0.3px">300 GB</div>
<div class="t " style="left:90px;top:693px;width:300px;text-align:right;letter-spacing:-0.3px">278 GB</div>
<div class="r" style="left:401px;top:695px;width:81px;height:17px;background:#e8e8e8;border:1px solid #c0c0c0"></div>
<div class="r" style="left:402px;top:696px;width:73px;height:15px;background:#00dc00"></div>
<div class="t " style="left:291px;top:693px;width:300px;text-align:center;">93 %</div>
<svg class="svg" style="left:29px;top:721px" width="13" height="8" viewBox="0 0 13 8"><rect x="0" y="2.5" width="13" height="5" rx="0.8" fill="#444"/><path d="M1.5 0.5 H11.5 L13 2.5 H0z" fill="#bbb"/><rect x="1.5" y="4.5" width="1.5" height="1" fill="#5c5"/></svg>
<div class="t " style="left:45px;top:714px;">E:\</div>
<div class="t " style="left:16px;top:714px;width:300px;text-align:right;letter-spacing:-0.3px">494 GB</div>
<div class="t " style="left:90px;top:714px;width:300px;text-align:right;letter-spacing:-0.3px">134 GB</div>
<div class="r" style="left:401px;top:716px;width:81px;height:17px;background:#e8e8e8;border:1px solid #c0c0c0"></div>
<div class="r" style="left:402px;top:717px;width:21px;height:15px;background:#00dc00"></div>
<div class="t " style="left:291px;top:714px;width:300px;text-align:center;">27 %</div>
<svg class="svg" style="left:29px;top:742px" width="13" height="8" viewBox="0 0 13 8"><rect x="0" y="2.5" width="13" height="5" rx="0.8" fill="#444"/><path d="M1.5 0.5 H11.5 L13 2.5 H0z" fill="#bbb"/><rect x="1.5" y="4.5" width="1.5" height="1" fill="#5c5"/></svg>
<div class="t " style="left:45px;top:735px;">F:\</div>
<div class="t " style="left:16px;top:735px;width:300px;text-align:right;letter-spacing:-0.3px">1.95 TB</div>
<div class="t " style="left:90px;top:735px;width:300px;text-align:right;letter-spacing:-0.3px">1.65 TB</div>
<div class="r" style="left:401px;top:737px;width:81px;height:17px;background:#e8e8e8;border:1px solid #c0c0c0"></div>
<div class="r" style="left:402px;top:738px;width:67px;height:15px;background:#00dc00"></div>
<div class="t " style="left:291px;top:735px;width:300px;text-align:center;">85 %</div>
<svg class="svg" style="left:29px;top:763px" width="13" height="8" viewBox="0 0 13 8"><rect x="0" y="2.5" width="13" height="5" rx="0.8" fill="#444"/><path d="M1.5 0.5 H11.5 L13 2.5 H0z" fill="#bbb"/><rect x="1.5" y="4.5" width="1.5" height="1" fill="#5c5"/></svg>
<div class="t " style="left:45px;top:756px;">G:\</div>
<div class="t " style="left:16px;top:756px;width:300px;text-align:right;letter-spacing:-0.3px">5.00 TB</div>
<div class="t " style="left:90px;top:756px;width:300px;text-align:right;letter-spacing:-0.3px">4.88 TB</div>
<div class="r" style="left:401px;top:758px;width:81px;height:17px;background:#e8e8e8;border:1px solid #c0c0c0"></div>
<div class="r" style="left:402px;top:759px;width:77px;height:15px;background:#00dc00"></div>
<div class="t " style="left:291px;top:756px;width:300px;text-align:center;">98 %</div>
<svg class="svg" style="left:29px;top:784px" width="13" height="8" viewBox="0 0 13 8"><rect x="0" y="2.5" width="13" height="5" rx="0.8" fill="#444"/><path d="M1.5 0.5 H11.5 L13 2.5 H0z" fill="#bbb"/><rect x="1.5" y="4.5" width="1.5" height="1" fill="#5c5"/></svg>
<div class="t " style="left:45px;top:777px;">H:\</div>
<div class="t " style="left:16px;top:777px;width:300px;text-align:right;letter-spacing:-0.3px">6.55 TB</div>
<div class="t " style="left:90px;top:777px;width:300px;text-align:right;letter-spacing:-0.3px">4.69 TB</div>
<div class="r" style="left:401px;top:779px;width:81px;height:17px;background:#e8e8e8;border:1px solid #c0c0c0"></div>
<div class="r" style="left:402px;top:780px;width:57px;height:15px;background:#00dc00"></div>
<div class="t " style="left:291px;top:777px;width:300px;text-align:center;">72 %</div>
<svg class="svg" style="left:29px;top:805px" width="13" height="8" viewBox="0 0 13 8"><rect x="0" y="2.5" width="13" height="5" rx="0.8" fill="#444"/><path d="M1.5 0.5 H11.5 L13 2.5 H0z" fill="#bbb"/><rect x="1.5" y="4.5" width="1.5" height="1" fill="#5c5"/></svg>
<div class="t " style="left:45px;top:798px;">I:\</div>
<div class="t " style="left:16px;top:798px;width:300px;text-align:right;letter-spacing:-0.3px">3.00 TB</div>
<div class="t " style="left:90px;top:798px;width:300px;text-align:right;letter-spacing:-0.3px">2.71 TB</div>
<div class="r" style="left:401px;top:800px;width:81px;height:17px;background:#e8e8e8;border:1px solid #c0c0c0"></div>
<div class="r" style="left:402px;top:801px;width:71px;height:15px;background:#00dc00"></div>
<div class="t " style="left:291px;top:798px;width:300px;text-align:center;">90 %</div>
<div class="t " style="left:17px;top:834px;font-size:12px"><i class="c">可</i><i class="c">用</i><i class="c">空</i><i class="c">间</i>: 190 GB&nbsp;&nbsp;(<i class="c">共</i> 446 GB)</div>
<div class="r" style="left:254px;top:832px;width:1px;height:20px;background:#d8d8d8"></div>
<div class="t " style="left:259px;top:834px;font-size:12px">729,210 <i class="c">文</i><i class="c">件</i></div>
<div class="r" style="left:414px;top:832px;width:1px;height:20px;background:#d8d8d8"></div>
<div class="t " style="left:419px;top:834px;font-size:12px">0 <i class="c">已</i><i class="c">排</i><i class="c">除</i></div>
<div class="r" style="left:508px;top:832px;width:1px;height:20px;background:#d8d8d8"></div>
<div class="t " style="left:513px;top:834px;font-size:12px">4,096 <i class="c">字</i><i class="c">节</i>/<i class="c">簇</i> (NTFS)</div>
<div class="r" style="left:495px;top:230px;width:934px;height:596px;background:#fff;border:1px solid #b9b9b9;border-radius:3px"></div>
<div class="r" style="left:14px;top:832px;width:1419px;height:1px;background:#dedede"></div>
<div class="r" style="left:559px;top:206px;width:82px;height:26px;background:#fff;border:1px solid #c8c8c8;border-bottom:none;border-radius:3px 3px 0 0"></div>
<svg class="svg" style="left:506px;top:211px" width="17" height="17" viewBox="0 0 17 17"><circle cx="8.5" cy="8.5" r="8" fill="#1f5fa8"/><path d="M8.5 8.5 V0.5 A8 8 0 0 0 0.7 10.5z" fill="#e8a33a"/><path d="M8.5 8.5 L0.7 10.5 A8 8 0 0 0 8.5 16.5z" fill="#d0462a"/></svg>
<div class="t " style="left:529px;top:208px;font-size:12px"><i class="c">图</i><i class="c">表</i></div>
<svg class="svg" style="left:567px;top:213px" width="13" height="11" viewBox="0 0 13 11"><g fill="#222"><rect x="0" y="0" width="3" height="1.3"/><rect x="5" y="0" width="8" height="1.3"/><rect x="0" y="4.5" width="3" height="1.3"/><rect x="5" y="4.5" width="8" height="1.3"/><rect x="0" y="9" width="3" height="1.3"/><rect x="5" y="9" width="8" height="1.3"/></g></svg>
<div class="t " style="left:587px;top:208px;font-size:12px"><i class="c">详</i><i class="c">细</i><i class="c">信</i><i class="c">息</i></div>
<svg class="svg" style="left:647px;top:210px" width="18" height="18" viewBox="0 0 18 18"><path d="M7 0 H17 V10 z" fill="#1f6fc4"/><rect x="8" y="0" width="9" height="9" fill="#1f6fc4"/><path d="M11 3 L14 6" stroke="#fff" stroke-width="1.2"/><circle cx="6.5" cy="11.5" r="6.3" fill="#c9896c"/><circle cx="6.5" cy="11.5" r="3" fill="#e0b0a0"/></svg>
<div class="t " style="left:669px;top:208px;font-size:12px"><i class="c">扩</i><i class="c">展</i><i class="c">名</i></div>
<svg class="svg" style="left:717px;top:210px" width="17" height="18" viewBox="0 0 17 18"><circle cx="8.5" cy="4" r="3.5" fill="#2f86d8"/><circle cx="3.5" cy="7.5" r="2.5" fill="#2f86d8"/><circle cx="13.5" cy="7.5" r="2.5" fill="#2f86d8"/><path d="M2 17 Q2 9 8.5 9 Q15 9 15 17z" fill="#2f86d8"/><path d="M0 14 Q0 10 3.5 10 V17 H0z M17 14 Q17 10 13.5 10 V17 H17z" fill="#5aa6e8"/></svg>
<div class="t " style="left:739px;top:208px;font-size:12px"><i class="c">用</i><i class="c">户</i></div>
<svg class="svg" style="left:776px;top:210px" width="15" height="15" viewBox="0 0 15 15"><rect x="0" y="1" width="15" height="14" fill="#2f8fe0"/><rect x="0" y="1" width="15" height="3" fill="#1a64b8"/><rect x="3" y="0" width="2" height="3" fill="#1a64b8"/><rect x="10" y="0" width="2" height="3" fill="#1a64b8"/><g fill="#cfe6fa"><rect x="2.5" y="6" width="1.5" height="1.5"/><rect x="5.5" y="6" width="1.5" height="1.5"/><rect x="8.5" y="6" width="1.5" height="1.5"/><rect x="11.5" y="6" width="1.5" height="1.5"/><rect x="2.5" y="9" width="1.5" height="1.5"/><rect x="5.5" y="9" width="1.5" height="1.5"/><rect x="8.5" y="9" width="1.5" height="1.5"/><rect x="11.5" y="9" width="1.5" height="1.5"/><rect x="2.5" y="12" width="1.5" height="1.5"/><rect x="5.5" y="12" width="1.5" height="1.5"/><rect x="8.5" y="12" width="1.5" height="1.5"/><rect x="11.5" y="12" width="1.5" height="1.5"/></g></svg>
<div class="t " style="left:797px;top:208px;font-size:12px"><i class="c">文</i><i class="c">件</i><i class="c">时</i><i class="c">长</i></div>
<svg class="svg" style="left:858px;top:210px" width="13" height="17" viewBox="0 0 13 17"><path d="M0.5 0.5 H9 L12.5 4 V16.5 H0.5z" fill="#fff" stroke="#888"/><path d="M6.5 14 V4 M3.5 7 L6.5 4 L9.5 7" stroke="#d83a1a" stroke-width="1.4" fill="none"/></svg>
<div class="t " style="left:879px;top:208px;font-size:12px"><i class="c">大</i><i class="c">文</i><i class="c">件</i></div>
<svg class="svg" style="left:927px;top:211px" width="17" height="14" viewBox="0 0 17 14"><path d="M0 14 L2 6 L5 9 L8 2 L11 7 L14 4 L17 14z" fill="#1f5fa8"/><path d="M2 14 L4 10 L7 12 L9 8 L12 11 L15 9 L17 14z" fill="#c9662a"/></svg>
<div class="t " style="left:949px;top:208px;font-size:12px"><i class="c">历</i><i class="c">史</i></div>
<div class="r" style="left:732px;top:252px;width:85px;height:573px;background:#f6f6f6"></div>
<div class="r" style="left:646px;top:233px;width:1px;height:19px;background:#ececec"></div>
<div class="r" style="left:732px;top:233px;width:1px;height:19px;background:#ececec"></div>
<div class="r" style="left:817px;top:233px;width:1px;height:19px;background:#ececec"></div>
<div class="r" style="left:871px;top:233px;width:1px;height:19px;background:#ececec"></div>
<div class="r" style="left:926px;top:233px;width:1px;height:19px;background:#ececec"></div>
<div class="r" style="left:1011px;top:233px;width:1px;height:19px;background:#ececec"></div>
<div class="r" style="left:1108px;top:233px;width:1px;height:19px;background:#ececec"></div>
<div class="r" style="left:1204px;top:233px;width:1px;height:19px;background:#ececec"></div>
<div class="r" style="left:1328px;top:233px;width:1px;height:19px;background:#ececec"></div>
<div class="t " style="left:502px;top:232px;font-size:12px"><i class="c">名</i><i class="c">称</i></div>
<div class="t " style="left:426px;top:232px;width:300px;text-align:right;font-size:12px"><i class="c">大</i><i class="c">小</i></div>
<div class="t " style="left:496px;top:232px;width:300px;text-align:right;font-size:12px"><i class="c">已</i><i class="c">分</i><i class="c">配</i></div>
<svg class="svg" style="left:801px;top:239px" width="8" height="5" viewBox="0 0 8 5"><path d="M0.5 0.5 L4 4 L7.5 0.5" stroke="#999" fill="none"/></svg>
<div class="t " style="left:566px;top:232px;width:300px;text-align:right;font-size:12px"><i class="c">文</i><i class="c">件</i></div>
<div class="t " style="left:621px;top:232px;width:300px;text-align:right;font-size:12px"><i class="c">文</i><i class="c">件</i><i class="c">夹</i></div>
<div class="t " style="left:933px;top:232px;font-size:12px"><i class="c">占</i><i class="c">上</i><i class="c">一</i><i class="c">层</i> %...</div>
<div class="t " style="left:1018px;top:232px;font-size:12px"><i class="c">上</i><i class="c">次</i><i class="c">修</i><i class="c">改</i></div>
<div class="t " style="left:1114px;top:232px;font-size:12px"><i class="c">上</i><i class="c">次</i><i class="c">访</i><i class="c">问</i></div>
<div class="t " style="left:1210px;top:232px;font-size:12px"><i class="c">所</i><i class="c">有</i><i class="c">者</i></div>
<svg class="svg" style="left:505px;top:255px" width="13" height="16" viewBox="0 0 13 16"><rect x="0.5" y="0.5" width="11" height="15" fill="#fbdf88" stroke="#e7be55" stroke-width="1"/><rect x="10.5" y="9.5" width="2" height="6" fill="#fbdf88" stroke="#e7be55" stroke-width="1"/></svg>
<div class="t b" style="left:525px;top:253px;">vmdisk</div>
<div class="t b" style="left:428px;top:253px;width:300px;text-align:right;letter-spacing:-0.4px">90.0 GB</div>
<div class="t b" style="left:513px;top:253px;width:300px;text-align:right;letter-spacing:-0.4px">90.0 GB</div>
<div class="t b" style="left:567px;top:253px;width:300px;text-align:right;letter-spacing:-0.4px">11</div>
<div class="t b" style="left:623px;top:253px;width:300px;text-align:right;letter-spacing:-0.4px">0</div>
<div class="r" style="left:928px;top:254px;width:83px;height:17px;background:#d9d9d9;border:1px solid #bdbdbd"></div>
<div class="r" style="left:929px;top:255px;width:29px;height:15px;background:linear-gradient(90deg,#c9c9f7,#b4b4f6)"></div>
<div class="t b" style="left:821px;top:253px;width:300px;text-align:center;letter-spacing:-0.4px">35.3 %</div>
<div class="t b" style="left:1022px;top:253px;">2022/6/15</div>
<div class="t b" style="left:1118px;top:253px;">2022/6/15</div>
<div class="t b" style="left:1214px;top:253px;">mefcl</div>
<svg class="svg" style="left:505px;top:275px" width="13" height="16" viewBox="0 0 13 16"><rect x="0.5" y="0.5" width="11" height="15" fill="#fbdf88" stroke="#e7be55" stroke-width="1"/><rect x="10.5" y="9.5" width="2" height="6" fill="#fbdf88" stroke="#e7be55" stroke-width="1"/></svg>
<div class="t b bl" style="left:525px;top:273px;">Users</div>
<div class="t b bl" style="left:428px;top:273px;width:300px;text-align:right;letter-spacing:-0.4px">52.7 GB</div>
<div class="t b bl" style="left:513px;top:273px;width:300px;text-align:right;letter-spacing:-0.4px">44.4 GB</div>
<div class="t b bl" style="left:567px;top:273px;width:300px;text-align:right;letter-spacing:-0.4px">184,0...</div>
<div class="t b bl" style="left:623px;top:273px;width:300px;text-align:right;letter-spacing:-0.4px">14,867</div>
<div class="r" style="left:928px;top:274px;width:83px;height:17px;background:#d9d9d9;border:1px solid #bdbdbd"></div>
<div class="r" style="left:929px;top:275px;width:14px;height:15px;background:linear-gradient(90deg,#c9c9f7,#b4b4f6)"></div>
<div class="t b bl" style="left:821px;top:273px;width:300px;text-align:center;letter-spacing:-0.4px">17.4 %</div>
<div class="t b bl" style="left:1022px;top:273px;">2022/6/17</div>
<div class="t b bl" style="left:1118px;top:273px;">2022/6/17</div>
<div class="t b bl" style="left:1214px;top:273px;">SYSTEM</div>
<svg class="svg" style="left:505px;top:295px" width="13" height="16" viewBox="0 0 13 16"><rect x="0.5" y="0.5" width="11" height="15" fill="#fbdf88" stroke="#e7be55" stroke-width="1"/><rect x="10.5" y="9.5" width="2" height="6" fill="#fbdf88" stroke="#e7be55" stroke-width="1"/></svg>
<div class="t b bl" style="left:525px;top:293px;">Program Files</div>
<div class="t b bl" style="left:428px;top:293px;width:300px;text-align:right;letter-spacing:-0.4px">41.1 GB</div>
<div class="t b bl" style="left:513px;top:293px;width:300px;text-align:right;letter-spacing:-0.4px">41.4 GB</div>
<div class="t b bl" style="left:567px;top:293px;width:300px;text-align:right;letter-spacing:-0.4px">53,148</div>
<div class="t b bl" style="left:623px;top:293px;width:300px;text-align:right;letter-spacing:-0.4px">5,183</div>
<div class="r" style="left:928px;top:294px;width:83px;height:17px;background:#d9d9d9;border:1px solid #bdbdbd"></div>
<div class="r" style="left:929px;top:295px;width:13px;height:15px;background:linear-gradient(90deg,#c9c9f7,#b4b4f6)"></div>
<div class="t b bl" style="left:821px;top:293px;width:300px;text-align:center;letter-spacing:-0.4px">16.2 %</div>
<div class="t b bl" style="left:1022px;top:293px;">2022/6/17</div>
<div class="t b bl" style="left:1118px;top:293px;">2022/6/17</div>
<div class="t b bl" style="left:1214px;top:293px;">TrustedInstaller</div>
<svg class="svg" style="left:505px;top:315px" width="13" height="16" viewBox="0 0 13 16"><rect x="0.5" y="0.5" width="11" height="15" fill="#fbdf88" stroke="#e7be55" stroke-width="1"/><rect x="10.5" y="9.5" width="2" height="6" fill="#fbdf88" stroke="#e7be55" stroke-width="1"/></svg>
<div class="t bl" style="left:525px;top:313px;">Windows</div>
<div class="t bl" style="left:428px;top:313px;width:300px;text-align:right;letter-spacing:-0.4px">25.6 GB</div>
<div class="t bl" style="left:513px;top:313px;width:300px;text-align:right;letter-spacing:-0.4px">26.1 GB</div>
<div class="t bl" style="left:567px;top:313px;width:300px;text-align:right;letter-spacing:-0.4px">441,2...</div>
<div class="t bl" style="left:623px;top:313px;width:300px;text-align:right;letter-spacing:-0.4px">159,0...</div>
<div class="r" style="left:928px;top:314px;width:83px;height:17px;background:#d9d9d9;border:1px solid #bdbdbd"></div>
<div class="r" style="left:929px;top:315px;width:8px;height:15px;background:linear-gradient(90deg,#c9c9f7,#b4b4f6)"></div>
<div class="t bl" style="left:821px;top:313px;width:300px;text-align:center;letter-spacing:-0.4px">10.2 %</div>
<div class="t bl" style="left:1022px;top:313px;">2022/6/17</div>
<div class="t bl" style="left:1118px;top:313px;">2022/6/17</div>
<div class="t bl" style="left:1214px;top:313px;">TrustedInstaller</div>
<svg class="svg" style="left:505px;top:335px" width="13" height="16" viewBox="0 0 13 16"><rect x="0.5" y="0.5" width="11" height="15" fill="#fbdf88" stroke="#e7be55" stroke-width="1"/><rect x="10.5" y="9.5" width="2" height="6" fill="#fbdf88" stroke="#e7be55" stroke-width="1"/></svg>
<div class="t " style="left:525px;top:333px;">i4Tools7</div>
<div class="t " style="left:428px;top:333px;width:300px;text-align:right;letter-spacing:-0.4px">16.4 GB</div>
<div class="t " style="left:513px;top:333px;width:300px;text-align:right;letter-spacing:-0.4px">16.4 GB</div>
<div class="t " style="left:567px;top:333px;width:300px;text-align:right;letter-spacing:-0.4px">5</div>
<div class="t " style="left:623px;top:333px;width:300px;text-align:right;letter-spacing:-0.4px">14</div>
<div class="r" style="left:928px;top:334px;width:83px;height:17px;background:#d9d9d9;border:1px solid #bdbdbd"></div>
<div class="r" style="left:929px;top:335px;width:5px;height:15px;background:linear-gradient(90deg,#c9c9f7,#b4b4f6)"></div>
<div class="t " style="left:821px;top:333px;width:300px;text-align:center;letter-spacing:-0.4px">6.4 %</div>
<div class="t " style="left:1022px;top:333px;">2022/6/17</div>
<div class="t " style="left:1118px;top:333px;">2022/6/17</div>
<div class="t " style="left:1214px;top:333px;">Administrators</div>
<svg class="svg" style="left:505px;top:355px" width="13" height="16" viewBox="0 0 13 16"><rect x="0.5" y="0.5" width="11" height="15" fill="#fbdf88" stroke="#e7be55" stroke-width="1"/><rect x="10.5" y="9.5" width="2" height="6" fill="#fbdf88" stroke="#e7be55" stroke-width="1"/></svg>
<div class="t " style="left:525px;top:353px;">Program Files (x86)</div>
<div class="t " style="left:428px;top:353px;width:300px;text-align:right;letter-spacing:-0.4px">12.8 GB</div>
<div class="t " style="left:513px;top:353px;width:300px;text-align:right;letter-spacing:-0.4px">12.8 GB</div>
<div class="t " style="left:567px;top:353px;width:300px;text-align:right;letter-spacing:-0.4px">35,115</div>
<div class="t " style="left:623px;top:353px;width:300px;text-align:right;letter-spacing:-0.4px">5,377</div>
<div class="r" style="left:928px;top:354px;width:83px;height:17px;background:#d9d9d9;border:1px solid #bdbdbd"></div>
<div class="r" style="left:929px;top:355px;width:4px;height:15px;background:linear-gradient(90deg,#c9c9f7,#b4b4f6)"></div>
<div class="t " style="left:821px;top:353px;width:300px;text-align:center;letter-spacing:-0.4px">5.0 %</div>
<div class="t " style="left:1022px;top:353px;">2022/6/17</div>
<div class="t " style="left:1118px;top:353px;">2022/6/17</div>
<div class="t " style="left:1214px;top:353px;">TrustedInstaller</div>
<svg class="svg" style="left:505px;top:375px" width="13" height="16" viewBox="0 0 13 16"><rect x="0.5" y="0.5" width="11" height="15" fill="#fdf0c6" stroke="#f1dfae" stroke-width="1"/><rect x="10.5" y="9.5" width="2" height="6" fill="#fdf0c6" stroke="#f1dfae" stroke-width="1"/></svg>
<div class="t " style="left:525px;top:373px;">ProgramData</div>
<div class="t " style="left:428px;top:373px;width:300px;text-align:right;letter-spacing:-0.4px">8.0 GB</div>
<div class="t " style="left:513px;top:373px;width:300px;text-align:right;letter-spacing:-0.4px">8.0 GB</div>
<div class="t " style="left:567px;top:373px;width:300px;text-align:right;letter-spacing:-0.4px">14,698</div>
<div class="t " style="left:623px;top:373px;width:300px;text-align:right;letter-spacing:-0.4px">2,125</div>
<div class="r" style="left:928px;top:374px;width:83px;height:17px;background:#d9d9d9;border:1px solid #bdbdbd"></div>
<div class="r" style="left:929px;top:375px;width:3px;height:15px;background:linear-gradient(90deg,#c9c9f7,#b4b4f6)"></div>
<div class="t " style="left:821px;top:373px;width:300px;text-align:center;letter-spacing:-0.4px">3.1 %</div>
<div class="t " style="left:1022px;top:373px;">2022/6/17</div>
<div class="t " style="left:1118px;top:373px;">2022/6/17</div>
<div class="t " style="left:1214px;top:373px;">SYSTEM</div>
<svg class="svg" style="left:505px;top:395px" width="13" height="16" viewBox="0 0 13 16"><rect x="0.5" y="0.5" width="11" height="15" fill="#fbdf88" stroke="#e7be55" stroke-width="1"/><rect x="10.5" y="9.5" width="2" height="6" fill="#fbdf88" stroke="#e7be55" stroke-width="1"/></svg>
<div class="t " style="left:525px;top:393px;">tools</div>
<div class="t " style="left:428px;top:393px;width:300px;text-align:right;letter-spacing:-0.4px">7.2 GB</div>
<div class="t " style="left:513px;top:393px;width:300px;text-align:right;letter-spacing:-0.4px">7.2 GB</div>
<div class="t " style="left:567px;top:393px;width:300px;text-align:right;letter-spacing:-0.4px">764</div>
<div class="t " style="left:623px;top:393px;width:300px;text-align:right;letter-spacing:-0.4px">59</div>
<div class="r" style="left:928px;top:394px;width:83px;height:17px;background:#d9d9d9;border:1px solid #bdbdbd"></div>
<div class="r" style="left:929px;top:395px;width:2px;height:15px;background:linear-gradient(90deg,#c9c9f7,#b4b4f6)"></div>
<div class="t " style="left:821px;top:393px;width:300px;text-align:center;letter-spacing:-0.4px">2.8 %</div>
<div class="t " style="left:1022px;top:393px;">2022/6/17</div>
<div class="t " style="left:1118px;top:393px;">2022/6/17</div>
<div class="t " style="left:1214px;top:393px;">mefcl</div>
<svg class="svg" style="left:505px;top:415px" width="13" height="16" viewBox="0 0 13 16"><path d="M0.5 0.5 H8.5 L11.5 3.5 V15.5 H0.5z" fill="#fff" stroke="#a8a8a8" stroke-width="1"/><path d="M8.5 0.5 V3.5 H11.5" fill="none" stroke="#a8a8a8"/></svg>
<svg class="svg" style="left:507px;top:419px" width="9" height="9" viewBox="0 0 9 9"><circle cx="3" cy="3" r="2.2" fill="none" stroke="#b0b0b0" stroke-width="0.9" stroke-dasharray="1.2 0.6"/><circle cx="6.3" cy="6.5" r="1.8" fill="none" stroke="#b0b0b0" stroke-width="0.9" stroke-dasharray="1.1 0.6"/></svg>
<div class="t " style="left:525px;top:413px;">hiberfil.sys</div>
<div class="t " style="left:428px;top:413px;width:300px;text-align:right;letter-spacing:-0.4px">6.4 GB</div>
<div class="t " style="left:513px;top:413px;width:300px;text-align:right;letter-spacing:-0.4px">6.4 GB</div>
<div class="t " style="left:567px;top:413px;width:300px;text-align:right;letter-spacing:-0.4px">1</div>
<div class="t " style="left:623px;top:413px;width:300px;text-align:right;letter-spacing:-0.4px">0</div>
<div class="r" style="left:928px;top:414px;width:83px;height:17px;background:#d9d9d9;border:1px solid #bdbdbd"></div>
<div class="r" style="left:929px;top:415px;width:2px;height:15px;background:linear-gradient(90deg,#c9c9f7,#b4b4f6)"></div>
<div class="t " style="left:821px;top:413px;width:300px;text-align:center;letter-spacing:-0.4px">2.5 %</div>
<div class="t " style="left:1022px;top:413px;">2022/6/17</div>
<div class="t " style="left:1118px;top:413px;">2022/6/17</div>
<div class="t " style="left:1214px;top:413px;">Administrators</div>
<svg class="svg" style="left:505px;top:435px" width="13" height="16" viewBox="0 0 13 16"><path d="M0.5 0.5 H8.5 L11.5 3.5 V15.5 H0.5z" fill="#fff" stroke="#a8a8a8" stroke-width="1"/><path d="M8.5 0.5 V3.5 H11.5" fill="none" stroke="#a8a8a8"/></svg>
<svg class="svg" style="left:507px;top:439px" width="9" height="9" viewBox="0 0 9 9"><circle cx="3" cy="3" r="2.2" fill="none" stroke="#b0b0b0" stroke-width="0.9" stroke-dasharray="1.2 0.6"/><circle cx="6.3" cy="6.5" r="1.8" fill="none" stroke="#b0b0b0" stroke-width="0.9" stroke-dasharray="1.1 0.6"/></svg>
<div class="t " style="left:525px;top:433px;">pagefile.sys</div>
<div class="t " style="left:428px;top:433px;width:300px;text-align:right;letter-spacing:-0.4px">1.0 GB</div>
<div class="t " style="left:513px;top:433px;width:300px;text-align:right;letter-spacing:-0.4px">1.0 GB</div>
<div class="t " style="left:567px;top:433px;width:300px;text-align:right;letter-spacing:-0.4px">1</div>
<div class="t " style="left:623px;top:433px;width:300px;text-align:right;letter-spacing:-0.4px">0</div>
<div class="r" style="left:928px;top:434px;width:83px;height:17px;background:#d9d9d9;border:1px solid #bdbdbd"></div>
<div class="t " style="left:821px;top:433px;width:300px;text-align:center;letter-spacing:-0.4px">0.4 %</div>
<div class="t " style="left:1022px;top:433px;">2022/6/15</div>
<div class="t " style="left:1118px;top:433px;">2022/6/15</div>
<div class="t " style="left:1214px;top:433px;">Administrators</div>
<svg class="svg" style="left:505px;top:455px" width="13" height="16" viewBox="0 0 13 16"><rect x="0.5" y="0.5" width="11" height="15" fill="#fdf0c6" stroke="#f1dfae" stroke-width="1"/><rect x="10.5" y="9.5" width="2" height="6" fill="#fdf0c6" stroke="#f1dfae" stroke-width="1"/></svg>
<div class="t " style="left:525px;top:453px;">Recovery</div>
<div class="t " style="left:428px;top:453px;width:300px;text-align:right;letter-spacing:-0.4px">751.1 MB</div>
<div class="t " style="left:513px;top:453px;width:300px;text-align:right;letter-spacing:-0.4px">751.1 MB</div>
<div class="t " style="left:567px;top:453px;width:300px;text-align:right;letter-spacing:-0.4px">6</div>
<div class="t " style="left:623px;top:453px;width:300px;text-align:right;letter-spacing:-0.4px">3</div>
<div class="r" style="left:928px;top:454px;width:83px;height:17px;background:#d9d9d9;border:1px solid #bdbdbd"></div>
<div class="t " style="left:821px;top:453px;width:300px;text-align:center;letter-spacing:-0.4px">0.3 %</div>
<div class="t " style="left:1022px;top:453px;">2022/6/15</div>
<div class="t " style="left:1118px;top:453px;">2022/6/17</div>
<div class="t " style="left:1214px;top:453px;">Administrators</div>
<svg class="svg" style="left:505px;top:475px" width="13" height="16" viewBox="0 0 13 16"><rect x="0.5" y="0.5" width="11" height="15" fill="#fdf0c6" stroke="#f1dfae" stroke-width="1"/><rect x="10.5" y="9.5" width="2" height="6" fill="#fdf0c6" stroke="#f1dfae" stroke-width="1"/></svg>
<div class="t " style="left:525px;top:473px;">$Recycle.Bin</div>
<div class="t " style="left:428px;top:473px;width:300px;text-align:right;letter-spacing:-0.4px">336.6 MB</div>
<div class="t " style="left:513px;top:473px;width:300px;text-align:right;letter-spacing:-0.4px">336.6 MB</div>
<div class="t " style="left:567px;top:473px;width:300px;text-align:right;letter-spacing:-0.4px">39</div>
<div class="t " style="left:623px;top:473px;width:300px;text-align:right;letter-spacing:-0.4px">5</div>
<div class="r" style="left:928px;top:474px;width:83px;height:17px;background:#d9d9d9;border:1px solid #bdbdbd"></div>
<div class="t " style="left:821px;top:473px;width:300px;text-align:center;letter-spacing:-0.4px">0.1 %</div>
<div class="t " style="left:1022px;top:473px;">2022/6/17</div>
<div class="t " style="left:1118px;top:473px;">2022/6/17</div>
<div class="t " style="left:1214px;top:473px;">SYSTEM</div>
<svg class="svg" style="left:505px;top:495px" width="13" height="16" viewBox="0 0 13 16"><path d="M0.5 0.5 H8.5 L11.5 3.5 V15.5 H0.5z" fill="#fff" stroke="#a8a8a8" stroke-width="1"/><path d="M8.5 0.5 V3.5 H11.5" fill="none" stroke="#a8a8a8"/></svg>
<svg class="svg" style="left:507px;top:499px" width="9" height="9" viewBox="0 0 9 9"><circle cx="3" cy="3" r="2.2" fill="none" stroke="#b0b0b0" stroke-width="0.9" stroke-dasharray="1.2 0.6"/><circle cx="6.3" cy="6.5" r="1.8" fill="none" stroke="#b0b0b0" stroke-width="0.9" stroke-dasharray="1.1 0.6"/></svg>
<div class="t " style="left:525px;top:493px;">swapfile.sys</div>
<div class="t " style="left:428px;top:493px;width:300px;text-align:right;letter-spacing:-0.4px">272.0 MB</div>
<div class="t " style="left:513px;top:493px;width:300px;text-align:right;letter-spacing:-0.4px">272.0 MB</div>
<div class="t " style="left:567px;top:493px;width:300px;text-align:right;letter-spacing:-0.4px">1</div>
<div class="t " style="left:623px;top:493px;width:300px;text-align:right;letter-spacing:-0.4px">0</div>
<div class="r" style="left:928px;top:494px;width:83px;height:17px;background:#d9d9d9;border:1px solid #bdbdbd"></div>
<div class="t " style="left:821px;top:493px;width:300px;text-align:center;letter-spacing:-0.4px">0.1 %</div>
<div class="t " style="left:1022px;top:493px;">2022/6/17</div>
<div class="t " style="left:1118px;top:493px;">2022/6/17</div>
<div class="t " style="left:1214px;top:493px;">Administrators</div>
<svg class="svg" style="left:505px;top:515px" width="13" height="16" viewBox="0 0 13 16"><rect x="0.5" y="0.5" width="11" height="15" fill="#fbdf88" stroke="#e7be55" stroke-width="1"/><rect x="10.5" y="9.5" width="2" height="6" fill="#fbdf88" stroke="#e7be55" stroke-width="1"/></svg>
<div class="t " style="left:525px;top:513px;">ShaLouData</div>
<div class="t " style="left:428px;top:513px;width:300px;text-align:right;letter-spacing:-0.4px">4.5 MB</div>
<div class="t " style="left:513px;top:513px;width:300px;text-align:right;letter-spacing:-0.4px">4.6 MB</div>
<div class="t " style="left:567px;top:513px;width:300px;text-align:right;letter-spacing:-0.4px">1</div>
<div class="t " style="left:623px;top:513px;width:300px;text-align:right;letter-spacing:-0.4px">1</div>
<div class="r" style="left:928px;top:514px;width:83px;height:17px;background:#d9d9d9;border:1px solid #bdbdbd"></div>
<div class="t " style="left:821px;top:513px;width:300px;text-align:center;letter-spacing:-0.4px">0.0 %</div>
<div class="t " style="left:1022px;top:513px;">2021/10/26</div>
<div class="t " style="left:1118px;top:513px;">2022/6/15</div>
<div class="t " style="left:1214px;top:513px;">Administrators</div>
<svg class="svg" style="left:505px;top:535px" width="13" height="16" viewBox="0 0 13 16"><rect x="0.5" y="0.5" width="11" height="15" fill="#fdf0c6" stroke="#f1dfae" stroke-width="1"/><rect x="10.5" y="9.5" width="2" height="6" fill="#fdf0c6" stroke="#f1dfae" stroke-width="1"/></svg>
<div class="t " style="left:525px;top:533px;">System Volume Inf...</div>
<div class="t " style="left:428px;top:533px;width:300px;text-align:right;letter-spacing:-0.4px">396.5 KB</div>
<div class="t " style="left:513px;top:533px;width:300px;text-align:right;letter-spacing:-0.4px">464.0 KB</div>
<div class="t " style="left:567px;top:533px;width:300px;text-align:right;letter-spacing:-0.4px">31</div>
<div class="t " style="left:623px;top:533px;width:300px;text-align:right;letter-spacing:-0.4px">13</div>
<div class="r" style="left:928px;top:534px;width:83px;height:17px;background:#d9d9d9;border:1px solid #bdbdbd"></div>
<div class="t " style="left:821px;top:533px;width:300px;text-align:center;letter-spacing:-0.4px">0.0 %</div>
<div class="t " style="left:1022px;top:533px;">2022/5/20</div>
<div class="t " style="left:1118px;top:533px;">2022/6/17</div>
<div class="t " style="left:1214px;top:533px;">Administrators</div>
<svg class="svg" style="left:505px;top:555px" width="13" height="16" viewBox="0 0 13 16"><path d="M0.5 0.5 H8.5 L11.5 3.5 V15.5 H0.5z" fill="#fff" stroke="#a8a8a8" stroke-width="1"/><path d="M8.5 0.5 V3.5 H11.5" fill="none" stroke="#a8a8a8"/></svg>
<div class="t " style="left:525px;top:553px;">DumpStack.log.tmp</div>
<div class="t " style="left:428px;top:553px;width:300px;text-align:right;letter-spacing:-0.4px">8.0 KB</div>
<div class="t " style="left:513px;top:553px;width:300px;text-align:right;letter-spacing:-0.4px">8.0 KB</div>
<div class="t " style="left:567px;top:553px;width:300px;text-align:right;letter-spacing:-0.4px">1</div>
<div class="t " style="left:623px;top:553px;width:300px;text-align:right;letter-spacing:-0.4px">0</div>
<div class="r" style="left:928px;top:554px;width:83px;height:17px;background:#d9d9d9;border:1px solid #bdbdbd"></div>
<div class="t " style="left:821px;top:553px;width:300px;text-align:center;letter-spacing:-0.4px">0.0 %</div>
<div class="t " style="left:1022px;top:553px;">2022/6/15</div>
<div class="t " style="left:1118px;top:553px;">2022/6/15</div>
<div class="t " style="left:1214px;top:553px;">Administrators</div>
<svg class="svg" style="left:505px;top:575px" width="13" height="16" viewBox="0 0 13 16"><path d="M0.5 0.5 H8.5 L11.5 3.5 V15.5 H0.5z" fill="#fff" stroke="#a8a8a8" stroke-width="1"/><path d="M8.5 0.5 V3.5 H11.5" fill="none" stroke="#a8a8a8"/></svg>
<div class="t " style="left:525px;top:573px;">AMTAG.BIN</div>
<div class="t " style="left:428px;top:573px;width:300px;text-align:right;letter-spacing:-0.4px">1.0 KB</div>
<div class="t " style="left:513px;top:573px;width:300px;text-align:right;letter-spacing:-0.4px">4.0 KB</div>
<div class="t " style="left:567px;top:573px;width:300px;text-align:right;letter-spacing:-0.4px">1</div>
<div class="t " style="left:623px;top:573px;width:300px;text-align:right;letter-spacing:-0.4px">0</div>
<div class="r" style="left:928px;top:574px;width:83px;height:17px;background:#d9d9d9;border:1px solid #bdbdbd"></div>
<div class="t " style="left:821px;top:573px;width:300px;text-align:center;letter-spacing:-0.4px">0.0 %</div>
<div class="t " style="left:1022px;top:573px;">2022/5/31</div>
<div class="t " style="left:1118px;top:573px;">2022/5/31</div>
<div class="t " style="left:1214px;top:573px;">Administrators</div>
<svg class="svg" style="left:505px;top:595px" width="13" height="16" viewBox="0 0 13 16"><rect x="0.5" y="0.5" width="11" height="15" fill="#fbdf88" stroke="#e7be55" stroke-width="1"/><rect x="10.5" y="9.5" width="2" height="6" fill="#fbdf88" stroke="#e7be55" stroke-width="1"/></svg>
<div class="t " style="left:525px;top:593px;">Microsoft</div>
<div class="t " style="left:428px;top:593px;width:300px;text-align:right;letter-spacing:-0.4px">1.3 KB</div>
<div class="t " style="left:513px;top:593px;width:300px;text-align:right;letter-spacing:-0.4px">4.0 KB</div>
<div class="t " style="left:567px;top:593px;width:300px;text-align:right;letter-spacing:-0.4px">1</div>
<div class="t " style="left:623px;top:593px;width:300px;text-align:right;letter-spacing:-0.4px">2</div>
<div class="r" style="left:928px;top:594px;width:83px;height:17px;background:#d9d9d9;border:1px solid #bdbdbd"></div>
<div class="t " style="left:821px;top:593px;width:300px;text-align:center;letter-spacing:-0.4px">0.0 %</div>
<div class="t " style="left:1022px;top:593px;">2022/3/23</div>
<div class="t " style="left:1118px;top:593px;">2022/6/15</div>
<div class="t " style="left:1214px;top:593px;">mefcl</div>
<svg class="svg" style="left:505px;top:615px" width="13" height="16" viewBox="0 0 13 16"><path d="M0.5 0.5 H8.5 L11.5 3.5 V15.5 H0.5z" fill="#fff" stroke="#a8a8a8" stroke-width="1"/><path d="M8.5 0.5 V3.5 H11.5" fill="none" stroke="#a8a8a8"/></svg>
<div class="t " style="left:525px;top:613px;">rsbmterm.cfg</div>
<div class="t " style="left:428px;top:613px;width:300px;text-align:right;letter-spacing:-0.4px">2.1 KB</div>
<div class="t " style="left:513px;top:613px;width:300px;text-align:right;letter-spacing:-0.4px">4.0 KB</div>
<div class="t " style="left:567px;top:613px;width:300px;text-align:right;letter-spacing:-0.4px">1</div>
<div class="t " style="left:623px;top:613px;width:300px;text-align:right;letter-spacing:-0.4px">0</div>
<div class="r" style="left:928px;top:614px;width:83px;height:17px;background:#d9d9d9;border:1px solid #bdbdbd"></div>
<div class="t " style="left:821px;top:613px;width:300px;text-align:center;letter-spacing:-0.4px">0.0 %</div>
<div class="t " style="left:1022px;top:613px;">2021/4/7</div>
<div class="t " style="left:1118px;top:613px;">2022/3/24</div>
<div class="t " style="left:1214px;top:613px;">Administrators</div>
<svg class="svg" style="left:505px;top:635px" width="13" height="16" viewBox="0 0 13 16"><path d="M0.5 0.5 H8.5 L11.5 3.5 V15.5 H0.5z" fill="#fff" stroke="#a8a8a8" stroke-width="1"/><path d="M8.5 0.5 V3.5 H11.5" fill="none" stroke="#a8a8a8"/></svg>
<div class="t " style="left:525px;top:633px;">SYSTAG.BIN</div>
<div class="t " style="left:428px;top:633px;width:300px;text-align:right;letter-spacing:-0.4px">1.0 KB</div>
<div class="t " style="left:513px;top:633px;width:300px;text-align:right;letter-spacing:-0.4px">4.0 KB</div>
<div class="t " style="left:567px;top:633px;width:300px;text-align:right;letter-spacing:-0.4px">1</div>
<div class="t " style="left:623px;top:633px;width:300px;text-align:right;letter-spacing:-0.4px">0</div>
<div class="r" style="left:928px;top:634px;width:83px;height:17px;background:#d9d9d9;border:1px solid #bdbdbd"></div>
<div class="t " style="left:821px;top:633px;width:300px;text-align:center;letter-spacing:-0.4px">0.0 %</div>
<div class="t " style="left:1022px;top:633px;">2021/1/14</div>
<div class="t " style="left:1118px;top:633px;">2022/5/1</div>
<div class="t " style="left:1214px;top:633px;">Administrators</div>
<svg class="svg" style="left:505px;top:655px" width="13" height="16" viewBox="0 0 13 16"><rect x="0.5" y="0.5" width="11" height="15" fill="#fdf0c6" stroke="#f1dfae" stroke-width="1"/><rect x="10.5" y="9.5" width="2" height="6" fill="#fdf0c6" stroke="#f1dfae" stroke-width="1"/></svg>
<div class="t " style="left:525px;top:653px;">$Windows.~WS</div>
<div class="t " style="left:428px;top:653px;width:300px;text-align:right;letter-spacing:-0.4px">0 <i class="c">字</i><i class="c">节</i></div>
<div class="t " style="left:513px;top:653px;width:300px;text-align:right;letter-spacing:-0.4px">0 <i class="c">字</i><i class="c">节</i></div>
<div class="t " style="left:567px;top:653px;width:300px;text-align:right;letter-spacing:-0.4px">0</div>
<div class="t " style="left:623px;top:653px;width:300px;text-align:right;letter-spacing:-0.4px">0</div>
<div class="r" style="left:928px;top:654px;width:83px;height:17px;background:#d9d9d9;border:1px solid #bdbdbd"></div>
<div class="t " style="left:821px;top:653px;width:300px;text-align:center;letter-spacing:-0.4px">0.0 %</div>
<div class="t " style="left:1022px;top:653px;">2021/7/11</div>
<div class="t " style="left:1118px;top:653px;">2022/6/15</div>
<div class="t " style="left:1214px;top:653px;">Administrators</div>
<svg class="svg" style="left:505px;top:675px" width="13" height="16" viewBox="0 0 13 16"><path d="M0.5 0.5 H8.5 L11.5 3.5 V15.5 H0.5z" fill="#fff" stroke="#a8a8a8" stroke-width="1"/><path d="M8.5 0.5 V3.5 H11.5" fill="none" stroke="#a8a8a8"/></svg>
<div class="t " style="left:525px;top:673px;">$WINRE_BACKUP_...</div>
<div class="t " style="left:428px;top:673px;width:300px;text-align:right;letter-spacing:-0.4px">0 <i class="c">字</i><i class="c">节</i></div>
<div class="t " style="left:513px;top:673px;width:300px;text-align:right;letter-spacing:-0.4px">0 <i class="c">字</i><i class="c">节</i></div>
<div class="t " style="left:567px;top:673px;width:300px;text-align:right;letter-spacing:-0.4px">1</div>
<div class="t " style="left:623px;top:673px;width:300px;text-align:right;letter-spacing:-0.4px">0</div>
<div class="r" style="left:928px;top:674px;width:83px;height:17px;background:#d9d9d9;border:1px solid #bdbdbd"></div>
<div class="t " style="left:821px;top:673px;width:300px;text-align:center;letter-spacing:-0.4px">0.0 %</div>
<div class="t " style="left:1022px;top:673px;">2021/12/23</div>
<div class="t " style="left:1118px;top:673px;">2021/12/23</div>
<div class="t " style="left:1214px;top:673px;">Administrators</div>
<svg class="svg" style="left:505px;top:695px" width="13" height="16" viewBox="0 0 13 16"><rect x="0.5" y="0.5" width="11" height="15" fill="#fdf0c6" stroke="#f1dfae" stroke-width="1"/><rect x="10.5" y="9.5" width="2" height="6" fill="#fdf0c6" stroke="#f1dfae" stroke-width="1"/></svg>
<div class="t " style="left:525px;top:693px;">$WinREAgent</div>
<div class="t " style="left:428px;top:693px;width:300px;text-align:right;letter-spacing:-0.4px">0 <i class="c">字</i><i class="c">节</i></div>
<div class="t " style="left:513px;top:693px;width:300px;text-align:right;letter-spacing:-0.4px">0 <i class="c">字</i><i class="c">节</i></div>
<div class="t " style="left:567px;top:693px;width:300px;text-align:right;letter-spacing:-0.4px">0</div>
<div class="t " style="left:623px;top:693px;width:300px;text-align:right;letter-spacing:-0.4px">0</div>
<div class="r" style="left:928px;top:694px;width:83px;height:17px;background:#d9d9d9;border:1px solid #bdbdbd"></div>
<div class="t " style="left:821px;top:693px;width:300px;text-align:center;letter-spacing:-0.4px">0.0 %</div>
<div class="t " style="left:1022px;top:693px;">2022/6/15</div>
<div class="t " style="left:1118px;top:693px;">2022/6/15</div>
<div class="t " style="left:1214px;top:693px;">Administrators</div>
<svg class="svg" style="left:505px;top:715px" width="13" height="16" viewBox="0 0 13 16"><rect x="0.5" y="0.5" width="11" height="15" fill="#fdf0c6" stroke="#f1dfae" stroke-width="1"/><rect x="10.5" y="9.5" width="2" height="6" fill="#fdf0c6" stroke="#f1dfae" stroke-width="1"/></svg>
<div class="t " style="left:525px;top:713px;">autorun.inf</div>
<div class="t " style="left:428px;top:713px;width:300px;text-align:right;letter-spacing:-0.4px">0 <i class="c">字</i><i class="c">节</i></div>
<div class="t " style="left:513px;top:713px;width:300px;text-align:right;letter-spacing:-0.4px">0 <i class="c">字</i><i class="c">节</i></div>
<div class="t " style="left:567px;top:713px;width:300px;text-align:right;letter-spacing:-0.4px">0</div>
<div class="t " style="left:623px;top:713px;width:300px;text-align:right;letter-spacing:-0.4px">1</div>
<div class="r" style="left:928px;top:714px;width:83px;height:17px;background:#d9d9d9;border:1px solid #bdbdbd"></div>
<div class="t " style="left:821px;top:713px;width:300px;text-align:center;letter-spacing:-0.4px">0.0 %</div>
<div class="t " style="left:1022px;top:713px;">2021/12/20</div>
<div class="t " style="left:1118px;top:713px;">2022/6/15</div>
<div class="t " style="left:1214px;top:713px;">Administrators</div>
<svg class="svg" style="left:505px;top:735px" width="13" height="16" viewBox="0 0 13 16"><path d="M0.5 0.5 H8.5 L11.5 3.5 V15.5 H0.5z" fill="#fff" stroke="#a8a8a8" stroke-width="1"/><path d="M8.5 0.5 V3.5 H11.5" fill="none" stroke="#a8a8a8"/></svg>
<div class="t " style="left:525px;top:733px;">bootTel.dat</div>
<div class="t " style="left:428px;top:733px;width:300px;text-align:right;letter-spacing:-0.4px">112 <i class="c">字</i><i class="c">节</i></div>
<div class="t " style="left:513px;top:733px;width:300px;text-align:right;letter-spacing:-0.4px">0 <i class="c">字</i><i class="c">节</i></div>
<div class="t " style="left:567px;top:733px;width:300px;text-align:right;letter-spacing:-0.4px">1</div>
<div class="t " style="left:623px;top:733px;width:300px;text-align:right;letter-spacing:-0.4px">0</div>
<div class="r" style="left:928px;top:734px;width:83px;height:17px;background:#d9d9d9;border:1px solid #bdbdbd"></div>
<div class="t " style="left:821px;top:733px;width:300px;text-align:center;letter-spacing:-0.4px">0.0 %</div>
<div class="t " style="left:1022px;top:733px;">2022/4/20</div>
<div class="t " style="left:1118px;top:733px;">2022/5/1</div>
<div class="t " style="left:1214px;top:733px;">Administrators</div>
<svg class="svg" style="left:505px;top:755px" width="13" height="16" viewBox="0 0 13 16"><rect x="0.5" y="0.5" width="11" height="15" fill="#fdf0c6" stroke="#f1dfae" stroke-width="1"/><rect x="10.5" y="9.5" width="2" height="6" fill="#fdf0c6" stroke="#f1dfae" stroke-width="1"/></svg>
<div class="t " style="left:525px;top:753px;">Documents and Se...</div>
<div class="t " style="left:428px;top:753px;width:300px;text-align:right;letter-spacing:-0.4px">0 <i class="c">字</i><i class="c">节</i></div>
<div class="t " style="left:513px;top:753px;width:300px;text-align:right;letter-spacing:-0.4px">0 <i class="c">字</i><i class="c">节</i></div>
<div class="t " style="left:567px;top:753px;width:300px;text-align:right;letter-spacing:-0.4px">0</div>
<div class="t " style="left:623px;top:753px;width:300px;text-align:right;letter-spacing:-0.4px">0</div>
<div class="r" style="left:928px;top:754px;width:83px;height:17px;background:#d9d9d9;border:1px solid #bdbdbd"></div>
<div class="t " style="left:821px;top:753px;width:300px;text-align:center;letter-spacing:-0.4px">0.0 %</div>
<div class="t " style="left:1022px;top:753px;">2020/7/16</div>
<div class="t " style="left:1118px;top:753px;">2020/7/16</div>
<div class="t " style="left:1214px;top:753px;">SYSTEM</div>
<svg class="svg" style="left:505px;top:775px" width="13" height="16" viewBox="0 0 13 16"><rect x="0.5" y="0.5" width="11" height="15" fill="#fdf0c6" stroke="#f1dfae" stroke-width="1"/><rect x="10.5" y="9.5" width="2" height="6" fill="#fdf0c6" stroke="#f1dfae" stroke-width="1"/></svg>
<div class="t " style="left:525px;top:773px;">OneDriveTemp</div>
<div class="t " style="left:428px;top:773px;width:300px;text-align:right;letter-spacing:-0.4px">0 <i class="c">字</i><i class="c">节</i></div>
<div class="t " style="left:513px;top:773px;width:300px;text-align:right;letter-spacing:-0.4px">0 <i class="c">字</i><i class="c">节</i></div>
<div class="t " style="left:567px;top:773px;width:300px;text-align:right;letter-spacing:-0.4px">0</div>
<div class="t " style="left:623px;top:773px;width:300px;text-align:right;letter-spacing:-0.4px">1</div>
<div class="r" style="left:928px;top:774px;width:83px;height:17px;background:#d9d9d9;border:1px solid #bdbdbd"></div>
<div class="t " style="left:821px;top:773px;width:300px;text-align:center;letter-spacing:-0.4px">0.0 %</div>
<div class="t " style="left:1022px;top:773px;">2021/7/1</div>
<div class="t " style="left:1118px;top:773px;">2022/6/15</div>
<div class="t " style="left:1214px;top:773px;">mefcl</div>
<svg class="svg" style="left:502px;top:796px" width="17" height="16" viewBox="0 0 17 16"><rect x="0.5" y="0.5" width="16" height="11" fill="#9fd7f5" stroke="#6aa" stroke-width="0.6"/><rect x="2" y="2" width="13" height="8" fill="#c5ecfc"/><rect x="4" y="13" width="9" height="1.5" fill="#9ab"/></svg>
<div class="t " style="left:525px;top:793px;">RECYCLER88</div>
<div class="t " style="left:428px;top:793px;width:300px;text-align:right;letter-spacing:-0.4px">64 <i class="c">字</i><i class="c">节</i></div>
<div class="t " style="left:513px;top:793px;width:300px;text-align:right;letter-spacing:-0.4px">0 <i class="c">字</i><i class="c">节</i></div>
<div class="t " style="left:567px;top:793px;width:300px;text-align:right;letter-spacing:-0.4px">1</div>
<div class="t " style="left:623px;top:793px;width:300px;text-align:right;letter-spacing:-0.4px">4</div>
<div class="r" style="left:928px;top:794px;width:83px;height:17px;background:#d9d9d9;border:1px solid #bdbdbd"></div>
<div class="t " style="left:821px;top:793px;width:300px;text-align:center;letter-spacing:-0.4px">0.0 %</div>
<div class="t " style="left:1022px;top:793px;">2021/3/23</div>
<div class="t " style="left:1118px;top:793px;">2022/6/17</div>
<div class="t " style="left:1214px;top:793px;">mefcl</div>
<svg class="svg" style="left:1420px;top:843px" width="8" height="8" viewBox="0 0 8 8"><g fill="#aaa"><rect x="6" y="0" width="1.5" height="1.5"/><rect x="3" y="3" width="1.5" height="1.5"/><rect x="6" y="3" width="1.5" height="1.5"/><rect x="0" y="6" width="1.5" height="1.5"/><rect x="3" y="6" width="1.5" height="1.5"/><rect x="6" y="6" width="1.5" height="1.5"/></g></svg>
<script>(function(){var s=document.createElement("span");s.style.cssText="position:absolute;left:0;top:0;font-family:Liberation Sans,sans-serif;font-size:12px;white-space:nowrap;visibility:hidden";s.textContent="字字字字";document.body.appendChild(s);var w=s.getBoundingClientRect().width;document.body.removeChild(s);if(w<44)document.documentElement.className+=" nocjk";})();</script>
</body></html>
